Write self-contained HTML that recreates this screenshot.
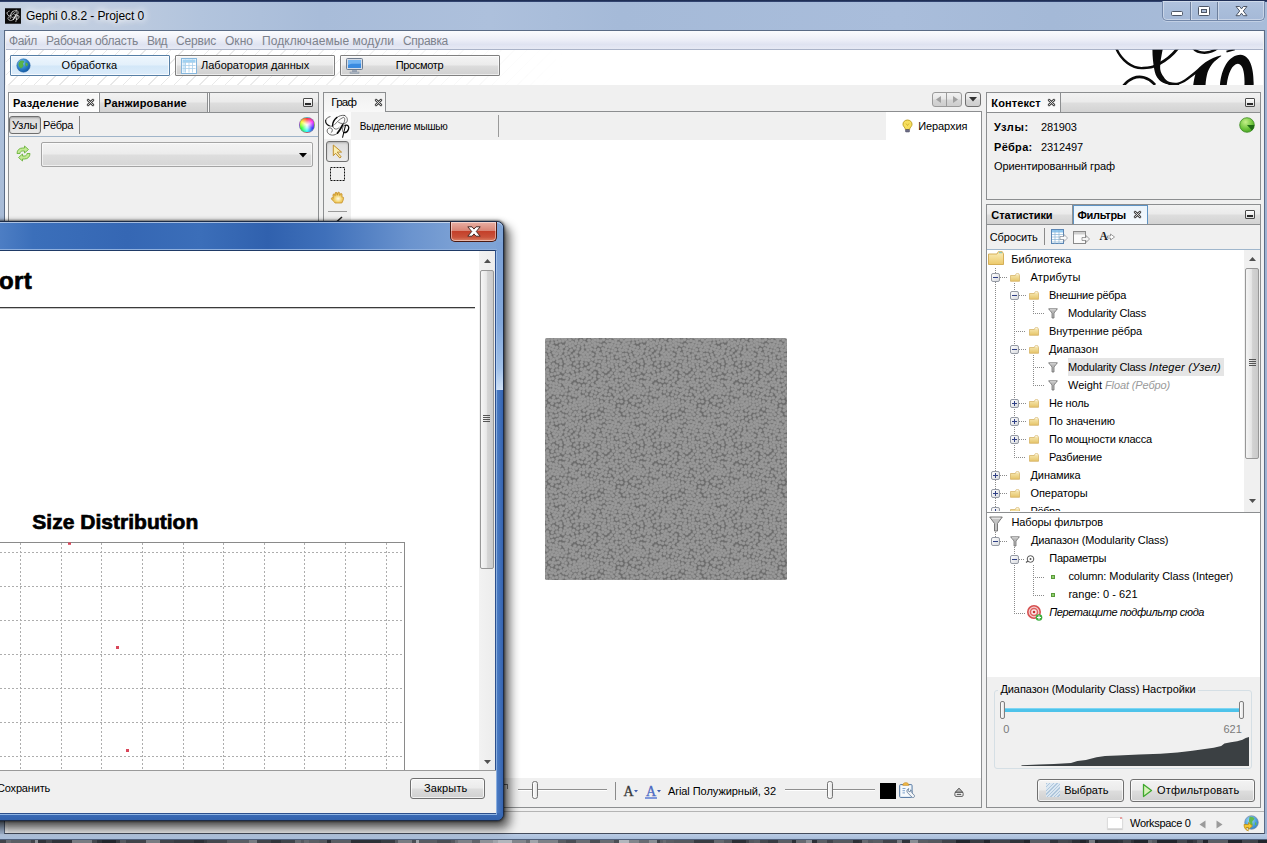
<!DOCTYPE html>
<html><head><meta charset="utf-8">
<style>
*{box-sizing:border-box;margin:0;padding:0}
html,body{width:1267px;height:843px;overflow:hidden;background:#2b2f33;font-family:"Liberation Sans",sans-serif;font-size:11px;color:#000}
.a{position:absolute}
.t{position:absolute;white-space:nowrap;line-height:14px;height:14px}
.b{font-weight:bold}
.i{font-style:italic}
/* window frame */
#frame{left:0;top:0;width:1267px;height:840px;background:linear-gradient(90deg,#c6d2e3 0,#c0cde0 100px,#b2c4dd 200px,#a8bcd9 320px,#adc0dc 490px,#a5bad8 620px,#a9bddb 900px,#a4b9d7 1050px,#a8bcd9 1267px)}
#topstrip{left:0;top:0;width:1267px;height:2px;background:linear-gradient(#1b294d 0,#283a66 70%,#5d729c 100%)}
#client{left:4px;top:30px;width:1261px;height:804px;background:#f0f0f0;border:1px solid #5a6b85;border-bottom-color:#444c5c}
#menubar{left:6px;top:31px;width:1257px;height:18px;background:linear-gradient(#fbfcfe 0,#eef0f8 45%,#dfe3f1 75%,#e6e9f4 100%)}
#menuline{left:6px;top:49px;width:1257px;height:1px;background:#aab3c8}
#toolbar{left:6px;top:50px;width:1257px;height:35px;background:#fff}
.mi{color:#7c818b;font-size:12px;top:34px}
.panel{border:1px solid #8e8f8f;background:#f0f0f0}
.tabbar{background:linear-gradient(#f3f3f3 0,#ebebeb 49%,#dcdcdc 50%,#d2d2d2 100%);border-bottom:1px solid #8e8f8f}
.tabsel{background:linear-gradient(#f1f1f1,#fdfdfd);border-right:1px solid #8e8f8f}
.tabun{border-right:1px solid #8e8f8f}
.btn{border:1px solid #707070;border-radius:3px;background:linear-gradient(#f4f4f4 0,#ececec 48%,#dedede 52%,#d2d2d2 100%);box-shadow:inset 0 0 0 1px rgba(255,255,255,.7)}
</style></head><body>
<div class="a" id="wall" style="left:0;top:838px;width:1267px;height:5px;background:linear-gradient(90deg,#40444a 0px,#40444a 6px,#666a70 6px,#666a70 11px,#5a5e64 11px,#5a5e64 31px,#40444a 31px,#40444a 35px,#8a8e94 35px,#8a8e94 38px,#30343a 38px,#30343a 46px,#44484e 46px,#44484e 52px,#30343a 52px,#30343a 72px,#787c82 72px,#787c82 92px,#44484e 92px,#44484e 97px,#30343a 97px,#30343a 102px,#22262c 102px,#22262c 116px,#383c42 116px,#383c42 120px,#55595f 120px,#55595f 123px,#55595f 123px,#55595f 126px,#40444a 126px,#40444a 146px,#787c82 146px,#787c82 160px,#40444a 160px,#40444a 174px,#383c42 174px,#383c42 194px,#2c3036 194px,#2c3036 204px,#383c42 204px,#383c42 207px,#44484e 207px,#44484e 227px,#5a5e64 227px,#5a5e64 235px,#5a5e64 235px,#5a5e64 249px,#787c82 249px,#787c82 257px,#40444a 257px,#40444a 271px,#30343a 271px,#30343a 281px,#40444a 281px,#40444a 295px,#666a70 295px,#666a70 301px,#55595f 301px,#55595f 304px,#666a70 304px,#666a70 309px,#5a5e64 309px,#5a5e64 313px,#5a5e64 313px,#5a5e64 319px,#55595f 319px,#55595f 327px,#2c3036 327px,#2c3036 331px,#5a5e64 331px,#5a5e64 351px,#2c3036 351px,#2c3036 371px,#2c3036 371px,#2c3036 381px,#383c42 381px,#383c42 395px,#55595f 395px,#55595f 398px,#787c82 398px,#787c82 412px,#4a4e54 412px,#4a4e54 416px,#a0a4aa 416px,#a0a4aa 419px,#585c62 419px,#585c62 429px,#585c62 429px,#585c62 437px,#4a4e54 437px,#4a4e54 443px,#4a4e54 443px,#4a4e54 451px,#54585e 451px,#54585e 455px,#6c7076 455px,#6c7076 458px,#7d8187 458px,#7d8187 472px,#60646a 472px,#60646a 480px,#8e9298 480px,#8e9298 483px,#8e9298 483px,#8e9298 493px,#a0a4aa 493px,#a0a4aa 498px,#b2b6bc 498px,#b2b6bc 512px,#82868c 512px,#82868c 526px,#686c72 526px,#686c72 530px,#a0a4aa 530px,#a0a4aa 538px,#7d8187 538px,#7d8187 544px,#7d8187 544px,#7d8187 558px,#585c62 558px,#585c62 566px,#4a4e54 566px,#4a4e54 576px,#686c72 576px,#686c72 590px,#4a4e54 590px,#4a4e54 600px,#686c72 600px,#686c72 614px,#4a4e54 614px,#4a4e54 619px,#b2b6bc 619px,#b2b6bc 629px,#82868c 629px,#82868c 639px,#686c72 639px,#686c72 649px,#8a8e94 649px,#8a8e94 657px,#40444a 657px,#40444a 660px,#5a5e64 660px,#5a5e64 663px,#666a70 663px,#666a70 666px,#5a5e64 666px,#5a5e64 674px,#55595f 674px,#55595f 694px,#383c42 694px,#383c42 704px,#383c42 704px,#383c42 714px,#666a70 714px,#666a70 724px,#55595f 724px,#55595f 732px,#2c3036 732px,#2c3036 746px,#40444a 746px,#40444a 749px,#55595f 749px,#55595f 754px,#5a5e64 754px,#5a5e64 760px,#44484e 760px,#44484e 768px,#383c42 768px,#383c42 778px,#5a5e64 778px,#5a5e64 792px,#2c3036 792px,#2c3036 796px,#666a70 796px,#666a70 806px,#8a8e94 806px,#8a8e94 812px,#2c3036 812px,#2c3036 817px,#5a5e64 817px,#5a5e64 827px,#40444a 827px,#40444a 833px,#55595f 833px,#55595f 853px,#2c3036 853px,#2c3036 859px,#30343a 859px,#30343a 862px,#666a70 862px,#666a70 868px,#55595f 868px,#55595f 873px,#5a5e64 873px,#5a5e64 883px,#40444a 883px,#40444a 887px,#40444a 887px,#40444a 897px,#787c82 897px,#787c82 902px,#30343a 902px,#30343a 910px,#8a8e94 910px,#8a8e94 918px,#5a5e64 918px,#5a5e64 928px,#55595f 928px,#55595f 942px,#40444a 942px,#40444a 956px,#22262c 956px,#22262c 970px,#383c42 970px,#383c42 984px,#22262c 984px,#22262c 990px,#40444a 990px,#40444a 1010px,#30343a 1010px,#30343a 1024px,#22262c 1024px,#22262c 1030px,#5a5e64 1030px,#5a5e64 1050px,#30343a 1050px,#30343a 1058px,#44484e 1058px,#44484e 1068px,#40444a 1068px,#40444a 1072px,#2c3036 1072px,#2c3036 1080px,#22262c 1080px,#22262c 1086px,#30343a 1086px,#30343a 1089px,#787c82 1089px,#787c82 1095px,#22262c 1095px,#22262c 1098px,#2c3036 1098px,#2c3036 1118px,#30343a 1118px,#30343a 1123px,#44484e 1123px,#44484e 1131px,#30343a 1131px,#30343a 1134px,#22262c 1134px,#22262c 1148px,#666a70 1148px,#666a70 1152px,#55595f 1152px,#55595f 1157px,#22262c 1157px,#22262c 1177px,#44484e 1177px,#44484e 1187px,#2c3036 1187px,#2c3036 1193px,#383c42 1193px,#383c42 1197px,#55595f 1197px,#55595f 1203px,#22262c 1203px,#22262c 1208px,#5a5e64 1208px,#5a5e64 1228px,#22262c 1228px,#22262c 1242px,#44484e 1242px,#44484e 1250px,#40444a 1250px,#40444a 1258px,#22262c 1258px,#22262c 1272px)"></div>
<div class="a" id="frame"></div>
<div class="a" id="topstrip"></div>
<div class="a" id="lframe" style="left:0;top:30px;width:4px;height:810px;background:linear-gradient(#b4c6df 0,#a6bad6 25%,#a6bad6 100%)"></div>
<div class="a" id="rframe" style="left:1265px;top:30px;width:2px;height:810px;background:#9db2d2"></div>
<div class="a" id="bframe" style="left:0;top:834px;width:1267px;height:6px;background:linear-gradient(#b9cbe4,#a9bedb);border-bottom:1px solid #50607c"></div>
<div class="a" id="client"></div>
<div class="a" id="menubar"></div>
<div class="a" id="menuline"></div>
<div class="a" id="toolbar"></div>
<svg class="a" style="left:5px;top:8px" width="16" height="16" viewBox="-40 -20 900 870"><rect x="-40" y="-20" width="900" height="870" fill="#0a0a0a"/><g fill="none" stroke="#f4f4f4" stroke-linecap="round" stroke-linejoin="round"><path d="M205 135C150 145 95 180 78 240" stroke-width="34"/><path d="M78 240C70 300 110 370 180 400" stroke-width="40"/><path d="M180 400C210 412 240 416 275 414" stroke-width="34"/><path d="M620 98C560 85 470 110 400 160" stroke-width="34"/><path d="M400 160C330 220 275 310 280 400" stroke-width="55"/><path d="M280 400C290 470 340 505 400 495C430 488 450 472 470 450" stroke-width="34"/><path d="M620 98C700 125 735 230 685 300C640 352 520 350 450 300" stroke-width="34"/><path d="M340 365C400 300 480 200 600 152C650 172 640 262 598 332" stroke-width="34"/><path d="M575 372C530 440 490 540 420 615" stroke-width="60"/><path d="M420 615C350 690 200 700 135 600C95 520 150 452 220 466C282 482 290 560 236 600" stroke-width="34"/><path d="M600 400C560 450 540 560 600 600" stroke-width="34"/><path d="M640 390C720 360 770 420 740 500C715 570 660 610 600 600" stroke-width="47"/><path d="M650 400L570 735" stroke-width="37"/></g></svg>
<div class="t" style="left:26.0px;top:7.8px;line-height:16px;height:16px;font-size:12px;letter-spacing:-0.09px;color:#000;text-shadow:0 0 6px #fff,0 0 8px #fff,0 0 10px rgba(255,255,255,.9);">Gephi 0.8.2 - Project 0</div>
<div class="a" style="left:1162px;top:1px;width:103px;height:20px;border:1px solid #7388aa;border-top:none;border-radius:0 0 5px 5px;background:linear-gradient(#b1c3de 0,#a9bdda 50%,#a5b9d7 100%);box-shadow:inset 0 0 0 1px rgba(255,255,255,.38),0 1px 0 rgba(255,255,255,.3)"></div>
<div class="a" style="left:1190px;top:2px;width:1px;height:18px;background:#6d7f9c;box-shadow:1px 0 0 rgba(255,255,255,.4)"></div>
<div class="a" style="left:1217px;top:2px;width:1px;height:18px;background:#6d7f9c;box-shadow:1px 0 0 rgba(255,255,255,.4)"></div>
<div class="a" style="left:1171px;top:11px;width:12px;height:5px;background:#fff;border:1px solid #4d5666;border-radius:1.500px"></div>
<div class="a" style="left:1198px;top:6px;width:12px;height:10px;background:#fff;border:1px solid #4d5666;border-radius:1.500px"></div>
<div class="a" style="left:1201px;top:9px;width:6px;height:4px;background:#a9bbd6;border:1px solid #4d5666"></div>
<svg class="a" style="left:1235px;top:5px" width="13" height="12" viewBox="0 0 13 12"><path d="M1 1.500h3.700l1.800 2.400 1.800-2.400H12L8.300 6l3.700 4.700H8.300L6.500 8.200l-1.800 2.500H1L4.700 6z" fill="#fff" stroke="#4d5666" stroke-width="1" stroke-linejoin="round"/></svg>
<div class="t" style="left:9.0px;top:32.8px;line-height:16px;height:16px;font-size:12px;letter-spacing:-0.38px;color:#7d828c;">Файл</div>
<div class="t" style="left:46.0px;top:32.8px;line-height:16px;height:16px;font-size:12px;letter-spacing:-0.18px;color:#7d828c;">Рабочая область</div>
<div class="t" style="left:147.0px;top:32.8px;line-height:16px;height:16px;font-size:12px;letter-spacing:-0.57px;color:#7d828c;">Вид</div>
<div class="t" style="left:176.0px;top:32.8px;line-height:16px;height:16px;font-size:12px;letter-spacing:-0.18px;color:#7d828c;">Сервис</div>
<div class="t" style="left:225.0px;top:32.8px;line-height:16px;height:16px;font-size:12px;letter-spacing:0.03px;color:#7d828c;">Окно</div>
<div class="t" style="left:262.0px;top:32.8px;line-height:16px;height:16px;font-size:12px;letter-spacing:0.07px;color:#7d828c;">Подключаемые модули</div>
<div class="t" style="left:403.0px;top:32.8px;line-height:16px;height:16px;font-size:12px;letter-spacing:-0.30px;color:#7d828c;">Справка</div>
<div class="a" style="left:6px;top:50px;width:560px;height:35px;background:repeating-linear-gradient(135deg,rgba(0,0,0,0) 0,rgba(0,0,0,0) 8px,rgba(150,150,150,.22) 8px,rgba(150,150,150,.22) 9px);-webkit-mask-image:linear-gradient(90deg,#000 0,#000 180px,transparent 560px);mask-image:linear-gradient(90deg,#000 0,#000 180px,transparent 560px)"></div>
<div class="a" style="left:10px;top:55px;width:160px;height:21px;border:1px solid #567fa6;border-radius:1px;background:linear-gradient(#eef6fd 0,#e3f0fb 48%,#d3e7f8 52%,#dcecfa 100%);box-shadow:inset 0 0 0 1px rgba(255,255,255,.7)"></div>
<div class="a" style="left:175px;top:55px;width:160px;height:21px;border:1px solid #808080;border-radius:1px;background:linear-gradient(#f4f4f4 0,#ebebeb 48%,#dcdcdc 52%,#d0d0d0 100%);box-shadow:inset 0 0 0 1px rgba(255,255,255,.6)"></div>
<div class="a" style="left:340px;top:55px;width:160px;height:21px;border:1px solid #808080;border-radius:1px;background:linear-gradient(#f4f4f4 0,#ebebeb 48%,#dcdcdc 52%,#d0d0d0 100%);box-shadow:inset 0 0 0 1px rgba(255,255,255,.6)"></div>
<div class="t" style="left:61.6px;top:57.7px;line-height:15px;height:15px;">Обработка</div>
<div class="t" style="left:201.0px;top:57.7px;line-height:15px;height:15px;">Лаборатория данных</div>
<div class="t" style="left:395.7px;top:57.7px;line-height:15px;height:15px;letter-spacing:-0.34px;">Просмотр</div>
<svg class="a" style="left:16px;top:58px" width="15" height="15" viewBox="0 0 17 17"><defs><radialGradient id="gl" cx=".35" cy=".3" r=".8"><stop offset="0" stop-color="#8fd0f5"/><stop offset=".5" stop-color="#2f86d0"/><stop offset="1" stop-color="#0d4f98"/></radialGradient></defs><circle cx="8.500" cy="8.500" r="7.600" fill="url(#gl)" stroke="#2a6aa8" stroke-width=".6"/><path d="M5 3.500c1.500-.8 3-.6 4 .2.300 1-.8 1.600-1.200 2.600-.4 1.200.9 1.700.4 3-.4 1.100-1.800 1.400-2.400 2.600C4.300 10.800 3 9.200 3 7c0-1.500.9-2.700 2-3.500zM11 5c1 .2 2 .9 2.600 2-.2 1.200-.9 2-1.800 2.600-.6-.9-1.300-1.500-1.100-2.700.1-.7.200-1.300.3-1.900z" fill="#59b44a" stroke="#3b8d36" stroke-width=".3"/></svg>
<svg class="a" style="left:181px;top:58px" width="16" height="16" viewBox="0 0 16 16"><rect x=".5" y=".5" width="15" height="15" fill="#fff" stroke="#86b6dc"/><rect x="1.500" y="1.500" width="13" height="2.500" fill="#9ed2f4"/><rect x="1.500" y="4" width="3" height="10.500" fill="#cfe8f9"/><path d="M1.500 4.500h13M1.500 7.500h13M1.500 10.500h13M4.500 1.500v13M8 1.500v13M11.500 1.500v13" stroke="#a9cfea" stroke-width=".8" fill="none"/></svg>
<svg class="a" style="left:346px;top:58px" width="17" height="16" viewBox="0 0 17 16"><rect x=".5" y=".5" width="16" height="11" rx="1" fill="#d5dce6" stroke="#6e7c8e"/><rect x="2" y="2" width="13" height="8" fill="#3a8be0"/><path d="M2 2h13v3.500C10 6.500 6 4.500 2 7z" fill="#72b4f2"/><rect x="6" y="12" width="5" height="2" fill="#9aa5b4"/><rect x="4" y="14" width="9" height="1.500" fill="#b8c1cd" stroke="#7b8796" stroke-width=".5"/></svg>
<svg class="a" style="left:1105px;top:45px" width="162" height="45" viewBox="0 0 1267 352"><defs><clipPath id="lc"><rect x="0" y="38" width="1242" height="274"/></clipPath></defs><g clip-path="url(#lc)"><g fill="none" stroke="#0a0a0a" stroke-linecap="butt"><path d="M85 20C125 120 215 188 300 180S375 172 392 160" stroke-width="19"/><path d="M425 146C460 128 520 90 572 22" stroke-width="22"/><path d="M690 25C725 72 825 72 880 25" stroke-width="19"/><path d="M950 52L1015 34" stroke-width="14"/><path d="M140 325C185 262 250 238 305 254S372 292 392 312" stroke-width="21"/></g><path d="M371 20L454 20C440 90 428 150 432 190C436 215 445 232 457 246C470 268 485 282 507 290C525 296 545 297 563 295.600C585 290 600 282 624 268C650 250 675 228 702 207C730 182 755 158 785 134.500C825 108 865 92 907 82L910 87C885 105 860 125 840 146C822 168 810 192 801.500 218C793 250 788 280 785 330L690 330L690.500 309.500C695 280 700 250 707 228C690 240 660 265 624 290C610 298 595 304 579 309.500L575 330L500 330L496 309.500C465 300 440 290 424 273C400 250 390 220 385 190C375 130 370 80 371 20Z" fill="#0a0a0a"/><path d="M898 330C905 200 960 80 1060 77C1140 80 1168 200 1162 330L1090 330C1096 220 1080 150 1040 146C990 150 960 230 950 330Z" fill="#0a0a0a"/></g></svg>

<!--MENU-->
<!--TOOLBAR-->
<div class="a" style="left:5px;top:85px;width:3px;height:748px;background:#f8f8f8"></div>
<div class="a" style="left:8px;top:92px;width:311px;height:716px;border:1px solid #8c8e90;background:#f0f0f0"></div>
<div class="a" style="left:9px;top:93px;width:309px;height:19px;background:linear-gradient(#f2f2f2 0,#ebebeb 45%,#dddddd 55%,#d3d3d3 100%);"></div>
<div class="a" style="left:9px;top:112px;width:309px;height:1px;background:#8c8e90"></div>
<div class="a" style="left:9px;top:93px;width:91px;height:19px;background:linear-gradient(#f6f6f6,#fdfdfd);border-right:1px solid #8c8e90;box-shadow:inset 1px 1px 0 #fff,inset -1px 0 0 #fff"></div>
<div class="a" style="left:207px;top:93px;width:1px;height:19px;background:#8c8e90"></div>
<div class="a" style="left:208px;top:93px;width:1px;height:19px;background:#f8f8f8"></div>
<div class="a" style="left:209px;top:93px;width:1px;height:19px;background:#8c8e90"></div>
<div class="t b" style="left:13.0px;top:95.7px;line-height:15px;height:15px;letter-spacing:0.15px;">Разделение</div>
<svg class="a" style="left:86px;top:98px" width="9" height="9" viewBox="0 0 9 9"><path d="M2 2l5 5M7 2l-5 5" stroke="#454545" stroke-width="2.500" stroke-linecap="round" fill="none"/><path d="M2 2l5 5M7 2l-5 5" stroke="#f4f4f4" stroke-width=".8" stroke-linecap="round" fill="none"/></svg>
<div class="t b" style="left:104.0px;top:95.7px;line-height:15px;height:15px;letter-spacing:0.23px;">Ранжирование</div>
<div class="a" style="left:303px;top:98px;width:10px;height:9px;border:1px solid #4a4a4a;background:linear-gradient(#fdfdfd,#dcdcdc);border-radius:1px"><div class="a" style="left:1px;top:4px;width:6px;height:2px;background:#2a2a2a"></div></div>
<div class="a" style="left:9px;top:136px;width:309px;height:1px;background:#9fb4c9"></div>
<div class="a" style="left:9px;top:116px;width:32px;height:18px;border:1px solid #6f6f6f;border-radius:3px;background:linear-gradient(#d9d9d9,#e9e9e9);box-shadow:inset 0 1px 2px rgba(0,0,0,.25)"></div>
<div class="t" style="left:12.0px;top:117.7px;line-height:15px;height:15px;letter-spacing:-0.03px;">Узлы</div>
<div class="t" style="left:43.0px;top:117.7px;line-height:15px;height:15px;letter-spacing:-0.40px;">Рёбра</div>
<div class="a" style="left:79px;top:116px;width:1px;height:18px;background:#8a8a8a"></div>
<div class="a" style="left:299px;top:117px;width:16px;height:16px;border-radius:50%;background:radial-gradient(circle,#fff 0,rgba(255,255,255,.6) 30%,rgba(255,255,255,0) 65%),conic-gradient(#f33,#f3f,#33f,#3ff,#3f3,#ff3,#f33);border:1px solid rgba(120,120,140,.6)"></div>
<div class="a" style="left:41px;top:142px;width:272px;height:25px;border:1px solid #a4a4a4;border-radius:2px;background:linear-gradient(#f3f3f3 0,#ececec 48%,#dedede 52%,#d6d6d6 100%);box-shadow:inset 0 0 0 1px rgba(255,255,255,.6)"></div>
<svg class="a" style="left:299px;top:153px" width="8" height="5" viewBox="0 0 8 5"><path d="M0 0h8L4 4.500z" fill="#000"/></svg>
<svg class="a" style="left:15px;top:145px" width="17" height="17" viewBox="0 0 17 17"><g fill="#c3ea94" stroke="#6cb33e" stroke-width=".9" stroke-linejoin="round"><path d="M2 8.500C2 5 4.500 3 7.500 3h2V1l4 3.500-4 3.500V6h-2C6 6 5 7 5 8.500z"/><path d="M15 8.500C15 12 12.500 14 9.500 14h-2v2l-4-3.500 4-3.500v2h2c1.500 0 2.500-1 2.500-2.500z"/></g></svg>

<div class="a" style="left:323px;top:111px;width:659px;height:697px;border:1px solid #8c8e90;background:#fff"></div>
<div class="a" style="left:323px;top:92px;width:63px;height:20px;border:1px solid #8c8e90;border-bottom:none;background:linear-gradient(#f1f1f1,#f8f8f8)"></div>
<div class="t" style="left:331.3px;top:95.3px;line-height:15.5px;height:15.5px;font-size:11.5px;letter-spacing:-0.71px;">Граф</div>
<svg class="a" style="left:374px;top:98px" width="9" height="9" viewBox="0 0 9 9"><path d="M2 2l5 5M7 2l-5 5" stroke="#454545" stroke-width="2.500" stroke-linecap="round" fill="none"/><path d="M2 2l5 5M7 2l-5 5" stroke="#f4f4f4" stroke-width=".8" stroke-linecap="round" fill="none"/></svg>
<div class="a" style="left:932px;top:92px;width:30px;height:15px;border:1px solid #9a9a9a;border-radius:3px;background:linear-gradient(#f2f2f2 0,#e6e6e6 48%,#d6d6d6 52%,#cecece 100%)"></div>
<div class="a" style="left:946px;top:93px;width:1px;height:13px;background:#9a9a9a"></div>
<svg class="a" style="left:936px;top:96px" width="6" height="7" viewBox="0 0 6 7"><path d="M5 0v7L0 3.500z" fill="#a0a0a0"/></svg>
<svg class="a" style="left:952px;top:96px" width="6" height="7" viewBox="0 0 6 7"><path d="M1 0v7l5-3.500z" fill="#a0a0a0"/></svg>
<div class="a" style="left:965px;top:92px;width:16px;height:15px;border:1px solid #707070;border-radius:3px;background:linear-gradient(#f2f2f2 0,#e6e6e6 48%,#d6d6d6 52%,#cecece 100%)"></div>
<svg class="a" style="left:969px;top:97px" width="8" height="5" viewBox="0 0 8 5"><path d="M0 0h8L4 4.500z" fill="#333"/></svg>
<div class="a" style="left:324px;top:112px;width:27px;height:695px;background:#f0f0f0"></div>
<div class="a" style="left:351px;top:112px;width:535px;height:28px;background:#f0f0f0"></div>
<div class="a" style="left:324px;top:112px;width:27px;height:27px;background:#fcfcfc"></div>
<svg class="a" style="left:323px;top:112px" width="30" height="29" viewBox="0 0 872 843"><g fill="none" stroke="#080808" stroke-linecap="round" stroke-linejoin="round"><path d="M205 135C150 145 95 180 78 240" stroke-width="19"/><path d="M78 240C70 300 110 370 180 400" stroke-width="32"/><path d="M180 400C210 412 240 416 275 414" stroke-width="17"/><path d="M620 98C560 85 470 110 400 160" stroke-width="18"/><path d="M400 160C330 220 275 310 280 400" stroke-width="44"/><path d="M280 400C290 470 340 505 400 495C430 488 450 472 470 450" stroke-width="16"/><path d="M620 98C700 125 735 230 685 300C640 352 520 350 450 300" stroke-width="16"/><path d="M340 365C400 300 480 200 600 152C650 172 640 262 598 332" stroke-width="16"/><path d="M575 372C530 440 490 540 420 615" stroke-width="48"/><path d="M420 615C350 690 200 700 135 600C95 520 150 452 220 466C282 482 290 560 236 600" stroke-width="18"/><path d="M600 400C560 450 540 560 600 600" stroke-width="17"/><path d="M640 390C720 360 770 420 740 500C715 570 660 610 600 600" stroke-width="38"/><path d="M650 400L570 735" stroke-width="30"/></g></svg>
<div class="t" style="left:359.7px;top:119.9px;line-height:14px;height:14px;font-size:10px;letter-spacing:-0.17px;">Выделение мышью</div>
<div class="a" style="left:498px;top:115px;width:1px;height:22px;background:#9a9a9a"></div>
<div class="a" style="left:326px;top:141px;width:23px;height:21px;border:1px solid #6f6f6f;border-radius:3px;background:linear-gradient(#dcdcdc,#ebebeb);box-shadow:inset 0 1px 2px rgba(0,0,0,.2)"></div>
<svg class="a" style="left:332px;top:144px" width="11" height="15" viewBox="0 0 11 15"><path d="M1.300 1v10.700l2.300-2.400 4.200 4.700 1.400-1.100-4-4.800h4.400z" fill="#fbeeb0" stroke="#c0902e" stroke-width="1" stroke-linejoin="round"/></svg>
<svg class="a" style="left:330px;top:167px" width="15" height="14" viewBox="0 0 15 14"><rect x=".5" y=".5" width="14" height="13" fill="none" stroke="#111" stroke-width="1" stroke-dasharray="2 1"/></svg>
<svg class="a" style="left:330px;top:191px" width="16" height="13" viewBox="0 0 16 13"><defs><radialGradient id="hg" cx=".55" cy=".6" r=".55"><stop offset="0" stop-color="#fffbea"/><stop offset=".55" stop-color="#f3d36e"/><stop offset="1" stop-color="#dca93a"/></radialGradient></defs><path d="M5 12C4.500 10.600 2.600 9.800 1.600 8.200C.9 7 2.200 6 3.300 7L3.400 7.200L2.900 4.200C2.800 2.800 4.500 2.500 4.900 3.800L5.100 4.600L5 2.400C5.100 1 7 1 7.200 2.300L7.400 4.200L7.600 2C7.900.8 9.600 1 9.700 2.300L9.700 4.400L10.200 3C10.700 2 12.200 2.400 12.100 3.600L11.900 6.200C12.800 5.600 13.800 6.200 13.600 7.200C13.300 9 12.800 10.600 11.800 12Z" fill="url(#hg)" stroke="#c9942e" stroke-width=".8" stroke-linejoin="round"/></svg>
<div class="a" style="left:328px;top:211px;width:19px;height:1px;background:#9a9a9a"></div>
<svg class="a" style="left:336px;top:216px" width="8" height="6" viewBox="0 0 8 6"><path d="M1 5.500L6 1" stroke="#222" stroke-width="1.500"/></svg>
<svg class="a" style="left:902px;top:119px" width="11" height="14" viewBox="0 0 11 14"><path d="M5.500 1C2.800 1 1 3 1 5.200c0 1.800 1.200 2.600 1.900 3.800.3.500.4 1 .4 1.500h4.400c0-.5.100-1 .4-1.500C8.800 7.800 10 7 10 5.200 10 3 8.200 1 5.500 1z" fill="#f7df5e" stroke="#b89a18" stroke-width=".9"/><path d="M4 4.500l1.500 2 1.500-2" fill="none" stroke="#c9a820" stroke-width=".7"/><rect x="3.500" y="10.500" width="4" height="2.500" rx=".6" fill="#6d6d86" stroke="#484860" stroke-width=".5"/></svg>
<div class="t" style="left:918.3px;top:118.7px;line-height:15px;height:15px;letter-spacing:-0.11px;">Иерархия</div>
<svg class="a" style="left:545px;top:338px" width="242" height="242" viewBox="0 0 242 242"><defs><pattern id="gp" width="81" height="81" patternUnits="userSpaceOnUse"><rect width="81" height="81" fill="#6b6b6b"/><g fill="#989898" stroke="#8a8a8a" stroke-width=".3"><circle cx="26.2" cy="12.2" r="1.75"/><circle cx="52.7" cy="5.9" r="1.75"/><circle cx="43.4" cy="29.6" r="1.75"/><circle cx="4.7" cy="41.1" r="1.75"/><circle cx="3.0" cy="35.1" r="1.75"/><circle cx="5.7" cy="7.3" r="1.75"/><circle cx="34.4" cy="67.0" r="1.75"/><circle cx="10.0" cy="18.1" r="1.75"/><circle cx="50.8" cy="76.8" r="1.75"/><circle cx="46.7" cy="32.1" r="1.75"/><circle cx="-1.9" cy="3.8" r="1.75"/><circle cx="79.1" cy="3.8" r="1.75"/><circle cx="69.5" cy="23.5" r="1.75"/><circle cx="11.7" cy="9.5" r="1.75"/><circle cx="25.0" cy="66.1" r="1.75"/><circle cx="14.6" cy="47.1" r="1.75"/><circle cx="51.8" cy="30.2" r="1.75"/><circle cx="44.4" cy="5.1" r="1.75"/><circle cx="4.8" cy="16.7" r="1.75"/><circle cx="55.1" cy="34.6" r="1.75"/><circle cx="25.4" cy="47.4" r="1.75"/><circle cx="36.7" cy="24.3" r="1.75"/><circle cx="64.3" cy="56.6" r="1.75"/><circle cx="19.8" cy="46.5" r="1.75"/><circle cx="42.5" cy="70.9" r="1.75"/><circle cx="59.1" cy="23.3" r="1.75"/><circle cx="-1.6" cy="9.6" r="1.75"/><circle cx="79.4" cy="9.6" r="1.75"/><circle cx="33.9" cy="61.3" r="1.75"/><circle cx="12.3" cy="39.6" r="1.75"/><circle cx="3.2" cy="54.1" r="1.75"/><circle cx="61.9" cy="46.4" r="1.75"/><circle cx="56.3" cy="48.1" r="1.75"/><circle cx="47.0" cy="37.0" r="1.75"/><circle cx="68.0" cy="76.5" r="1.75"/><circle cx="38.4" cy="53.8" r="1.75"/><circle cx="4.9" cy="56.8" r="1.75"/><circle cx="52.4" cy="-0.6" r="1.75"/><circle cx="52.4" cy="80.4" r="1.75"/><circle cx="66.6" cy="23.1" r="1.75"/><circle cx="31.2" cy="54.2" r="1.75"/><circle cx="4.8" cy="62.2" r="1.75"/><circle cx="31.7" cy="70.6" r="1.75"/><circle cx="6.5" cy="36.4" r="1.75"/><circle cx="66.4" cy="70.0" r="1.75"/><circle cx="22.6" cy="33.6" r="1.75"/><circle cx="77.6" cy="12.2" r="1.75"/><circle cx="14.3" cy="18.8" r="1.75"/><circle cx="18.9" cy="39.3" r="1.75"/><circle cx="47.7" cy="21.3" r="1.75"/><circle cx="0.3" cy="33.9" r="1.75"/><circle cx="81.3" cy="33.9" r="1.75"/><circle cx="29.9" cy="45.9" r="1.75"/><circle cx="77.2" cy="55.9" r="1.75"/><circle cx="41.8" cy="50.0" r="1.75"/><circle cx="72.9" cy="63.2" r="1.75"/><circle cx="31.8" cy="32.3" r="1.75"/><circle cx="8.4" cy="51.4" r="1.75"/><circle cx="16.9" cy="13.1" r="1.75"/><circle cx="27.5" cy="4.3" r="1.75"/><circle cx="0.0" cy="12.3" r="1.75"/><circle cx="81.0" cy="12.3" r="1.75"/><circle cx="8.2" cy="29.5" r="1.75"/><circle cx="2.1" cy="70.8" r="1.75"/><circle cx="49.7" cy="12.0" r="1.75"/><circle cx="20.4" cy="28.1" r="1.75"/><circle cx="29.5" cy="10.0" r="1.75"/><circle cx="68.8" cy="-0.6" r="1.75"/><circle cx="68.8" cy="80.4" r="1.75"/><circle cx="37.7" cy="39.2" r="1.75"/><circle cx="27.8" cy="21.4" r="1.75"/><circle cx="67.1" cy="13.1" r="1.75"/><circle cx="1.9" cy="77.0" r="1.75"/><circle cx="82.9" cy="77.0" r="1.75"/><circle cx="42.8" cy="11.9" r="1.75"/><circle cx="44.0" cy="2.2" r="1.75"/><circle cx="42.8" cy="-1.7" r="1.75"/><circle cx="42.8" cy="79.3" r="1.75"/><circle cx="69.9" cy="56.4" r="1.75"/><circle cx="13.5" cy="62.5" r="1.75"/><circle cx="43.1" cy="63.1" r="1.75"/><circle cx="26.7" cy="18.1" r="1.75"/><circle cx="65.7" cy="-1.2" r="1.75"/><circle cx="65.7" cy="79.8" r="1.75"/><circle cx="69.1" cy="65.3" r="1.75"/><circle cx="66.3" cy="59.9" r="1.75"/><circle cx="2.3" cy="22.6" r="1.75"/><circle cx="21.0" cy="56.1" r="1.75"/><circle cx="77.5" cy="36.2" r="1.75"/><circle cx="75.9" cy="-1.0" r="1.75"/><circle cx="75.9" cy="80.0" r="1.75"/><circle cx="77.4" cy="29.5" r="1.75"/><circle cx="17.9" cy="18.4" r="1.75"/><circle cx="50.5" cy="72.9" r="1.75"/><circle cx="68.1" cy="38.8" r="1.75"/><circle cx="52.9" cy="64.8" r="1.75"/><circle cx="60.8" cy="38.7" r="1.75"/><circle cx="78.7" cy="32.1" r="1.75"/><circle cx="32.5" cy="76.7" r="1.75"/><circle cx="58.7" cy="13.8" r="1.75"/><circle cx="10.3" cy="12.2" r="1.75"/><circle cx="11.8" cy="66.9" r="1.75"/><circle cx="-1.6" cy="53.2" r="1.75"/><circle cx="79.4" cy="53.2" r="1.75"/><circle cx="10.6" cy="1.2" r="1.75"/><circle cx="10.6" cy="82.2" r="1.75"/><circle cx="42.7" cy="75.6" r="1.75"/><circle cx="35.1" cy="70.6" r="1.75"/><circle cx="66.9" cy="17.1" r="1.75"/><circle cx="20.4" cy="23.7" r="1.75"/><circle cx="10.6" cy="73.7" r="1.75"/><circle cx="28.7" cy="37.1" r="1.75"/><circle cx="47.3" cy="73.2" r="1.75"/><circle cx="40.6" cy="43.1" r="1.75"/><circle cx="35.7" cy="14.8" r="1.75"/><circle cx="0.3" cy="64.7" r="1.75"/><circle cx="81.3" cy="64.7" r="1.75"/><circle cx="58.7" cy="45.1" r="1.75"/><circle cx="26.4" cy="42.0" r="1.75"/><circle cx="8.6" cy="45.4" r="1.75"/><circle cx="62.6" cy="41.1" r="1.75"/><circle cx="73.9" cy="35.9" r="1.75"/><circle cx="49.6" cy="40.9" r="1.75"/><circle cx="41.5" cy="56.1" r="1.75"/><circle cx="36.6" cy="43.2" r="1.75"/><circle cx="38.7" cy="76.3" r="1.75"/><circle cx="56.6" cy="71.0" r="1.75"/><circle cx="76.3" cy="21.0" r="1.75"/><circle cx="9.9" cy="35.8" r="1.75"/><circle cx="5.9" cy="19.5" r="1.75"/><circle cx="63.5" cy="72.7" r="1.75"/><circle cx="12.5" cy="58.0" r="1.75"/><circle cx="53.5" cy="11.6" r="1.75"/><circle cx="71.5" cy="78.4" r="1.75"/><circle cx="17.8" cy="77.2" r="1.75"/><circle cx="32.3" cy="39.5" r="1.75"/><circle cx="-0.8" cy="67.4" r="1.75"/><circle cx="80.2" cy="67.4" r="1.75"/><circle cx="13.1" cy="35.0" r="1.75"/><circle cx="15.9" cy="25.8" r="1.75"/><circle cx="58.5" cy="1.6" r="1.75"/><circle cx="58.5" cy="82.6" r="1.75"/><circle cx="1.5" cy="26.9" r="1.75"/><circle cx="82.5" cy="26.9" r="1.75"/><circle cx="5.2" cy="-1.2" r="1.75"/><circle cx="5.2" cy="79.8" r="1.75"/><circle cx="8.5" cy="21.5" r="1.75"/><circle cx="21.9" cy="10.5" r="1.75"/><circle cx="34.2" cy="73.8" r="1.75"/><circle cx="46.2" cy="56.7" r="1.75"/><circle cx="7.2" cy="4.7" r="1.75"/><circle cx="5.9" cy="76.0" r="1.75"/><circle cx="6.8" cy="69.4" r="1.75"/><circle cx="36.8" cy="27.5" r="1.75"/><circle cx="42.7" cy="19.3" r="1.75"/><circle cx="25.3" cy="24.7" r="1.75"/><circle cx="40.5" cy="14.4" r="1.75"/><circle cx="20.3" cy="1.2" r="1.75"/><circle cx="20.3" cy="82.2" r="1.75"/><circle cx="15.3" cy="38.5" r="1.75"/><circle cx="75.7" cy="8.6" r="1.75"/><circle cx="66.3" cy="35.0" r="1.75"/><circle cx="40.1" cy="67.6" r="1.75"/><circle cx="55.7" cy="-1.4" r="1.75"/><circle cx="55.7" cy="79.6" r="1.75"/><circle cx="27.8" cy="67.4" r="1.75"/><circle cx="57.2" cy="51.5" r="1.75"/><circle cx="32.8" cy="28.2" r="1.75"/><circle cx="4.4" cy="10.5" r="1.75"/><circle cx="20.7" cy="13.2" r="1.75"/><circle cx="22.8" cy="19.6" r="1.75"/><circle cx="23.7" cy="37.2" r="1.75"/><circle cx="21.3" cy="77.9" r="1.75"/><circle cx="78.8" cy="44.3" r="1.75"/><circle cx="25.1" cy="28.9" r="1.75"/><circle cx="7.3" cy="32.4" r="1.75"/><circle cx="3.4" cy="1.8" r="1.75"/><circle cx="3.4" cy="82.8" r="1.75"/><circle cx="47.4" cy="42.9" r="1.75"/><circle cx="60.8" cy="53.3" r="1.75"/><circle cx="3.5" cy="67.7" r="1.75"/><circle cx="72.2" cy="50.8" r="1.75"/><circle cx="59.4" cy="65.8" r="1.75"/><circle cx="11.3" cy="42.4" r="1.75"/><circle cx="65.2" cy="66.9" r="1.75"/><circle cx="55.3" cy="56.2" r="1.75"/><circle cx="45.2" cy="50.8" r="1.75"/><circle cx="50.7" cy="55.1" r="1.75"/><circle cx="39.6" cy="0.3" r="1.75"/><circle cx="39.6" cy="81.3" r="1.75"/><circle cx="59.7" cy="20.4" r="1.75"/><circle cx="59.1" cy="16.6" r="1.75"/><circle cx="59.9" cy="-2.0" r="1.75"/><circle cx="59.9" cy="79.0" r="1.75"/><circle cx="40.0" cy="31.0" r="1.75"/><circle cx="62.1" cy="50.0" r="1.75"/><circle cx="11.9" cy="20.6" r="1.75"/><circle cx="54.7" cy="23.6" r="1.75"/><circle cx="41.8" cy="37.6" r="1.75"/><circle cx="37.8" cy="9.6" r="1.75"/><circle cx="72.4" cy="16.1" r="1.75"/><circle cx="-1.8" cy="75.8" r="1.75"/><circle cx="79.2" cy="75.8" r="1.75"/><circle cx="66.4" cy="41.2" r="1.75"/><circle cx="18.7" cy="72.7" r="1.75"/><circle cx="0.3" cy="39.8" r="1.75"/><circle cx="81.3" cy="39.8" r="1.75"/><circle cx="11.4" cy="27.9" r="1.75"/><circle cx="0.1" cy="60.8" r="1.75"/><circle cx="81.1" cy="60.8" r="1.75"/><circle cx="68.0" cy="9.7" r="1.75"/><circle cx="73.0" cy="23.5" r="1.75"/><circle cx="-0.1" cy="47.7" r="1.75"/><circle cx="80.9" cy="47.7" r="1.75"/><circle cx="22.3" cy="3.9" r="1.75"/><circle cx="24.1" cy="59.9" r="1.75"/><circle cx="13.6" cy="13.1" r="1.75"/><circle cx="15.6" cy="7.3" r="1.75"/><circle cx="27.7" cy="7.4" r="1.75"/><circle cx="19.4" cy="20.9" r="1.75"/><circle cx="60.7" cy="33.4" r="1.75"/><circle cx="33.5" cy="42.5" r="1.75"/><circle cx="32.4" cy="36.1" r="1.75"/><circle cx="77.3" cy="68.7" r="1.75"/><circle cx="70.7" cy="1.8" r="1.75"/><circle cx="70.7" cy="82.8" r="1.75"/><circle cx="47.6" cy="0.0" r="1.75"/><circle cx="47.6" cy="81.0" r="1.75"/><circle cx="52.4" cy="61.9" r="1.75"/><circle cx="42.5" cy="47.2" r="1.75"/><circle cx="31.4" cy="18.1" r="1.75"/><circle cx="71.6" cy="38.5" r="1.75"/><circle cx="24.9" cy="1.8" r="1.75"/><circle cx="24.9" cy="82.8" r="1.75"/><circle cx="34.0" cy="20.8" r="1.75"/><circle cx="54.1" cy="74.9" r="1.75"/><circle cx="27.4" cy="34.1" r="1.75"/><circle cx="55.3" cy="16.0" r="1.75"/><circle cx="78.6" cy="25.2" r="1.75"/><circle cx="17.9" cy="61.6" r="1.75"/><circle cx="18.1" cy="33.8" r="1.75"/><circle cx="11.9" cy="31.9" r="1.75"/><circle cx="11.5" cy="4.2" r="1.75"/><circle cx="72.8" cy="71.6" r="1.75"/><circle cx="75.5" cy="26.7" r="1.75"/><circle cx="15.0" cy="75.8" r="1.75"/><circle cx="13.7" cy="0.2" r="1.75"/><circle cx="13.7" cy="81.2" r="1.75"/><circle cx="78.1" cy="16.8" r="1.75"/><circle cx="30.2" cy="74.5" r="1.75"/><circle cx="15.6" cy="29.5" r="1.75"/><circle cx="62.1" cy="3.3" r="1.75"/><circle cx="2.8" cy="5.1" r="1.75"/><circle cx="60.5" cy="72.8" r="1.75"/><circle cx="77.6" cy="50.0" r="1.75"/><circle cx="76.4" cy="2.0" r="1.75"/><circle cx="76.4" cy="83.0" r="1.75"/><circle cx="75.2" cy="14.8" r="1.75"/><circle cx="49.2" cy="26.6" r="1.75"/><circle cx="63.4" cy="6.4" r="1.75"/><circle cx="2.7" cy="44.8" r="1.75"/><circle cx="26.4" cy="-1.6" r="1.75"/><circle cx="26.4" cy="79.4" r="1.75"/><circle cx="21.5" cy="6.8" r="1.75"/><circle cx="7.8" cy="40.4" r="1.75"/><circle cx="60.6" cy="68.6" r="1.75"/><circle cx="32.1" cy="-0.6" r="1.75"/><circle cx="32.1" cy="80.4" r="1.75"/><circle cx="65.5" cy="52.9" r="1.75"/><circle cx="21.1" cy="63.0" r="1.75"/><circle cx="48.3" cy="50.2" r="1.75"/><circle cx="64.4" cy="44.4" r="1.75"/><circle cx="29.5" cy="16.0" r="1.75"/><circle cx="16.0" cy="10.3" r="1.75"/><circle cx="39.1" cy="4.3" r="1.75"/><circle cx="75.0" cy="31.4" r="1.75"/><circle cx="63.7" cy="18.0" r="1.75"/><circle cx="34.0" cy="47.2" r="1.75"/><circle cx="34.5" cy="53.4" r="1.75"/><circle cx="36.2" cy="35.5" r="1.75"/><circle cx="1.9" cy="50.1" r="1.75"/><circle cx="82.9" cy="50.1" r="1.75"/><circle cx="39.6" cy="19.1" r="1.75"/><circle cx="61.8" cy="63.2" r="1.75"/><circle cx="5.3" cy="28.4" r="1.75"/><circle cx="41.0" cy="25.8" r="1.75"/><circle cx="70.7" cy="45.0" r="1.75"/><circle cx="29.2" cy="61.9" r="1.75"/><circle cx="47.5" cy="53.8" r="1.75"/><circle cx="49.9" cy="35.0" r="1.75"/><circle cx="47.7" cy="16.5" r="1.75"/><circle cx="75.9" cy="59.4" r="1.75"/><circle cx="18.3" cy="8.5" r="1.75"/><circle cx="21.5" cy="52.0" r="1.75"/><circle cx="60.4" cy="26.5" r="1.75"/><circle cx="71.3" cy="26.6" r="1.75"/><circle cx="35.4" cy="58.7" r="1.75"/><circle cx="46.2" cy="24.9" r="1.75"/><circle cx="17.2" cy="50.4" r="1.75"/><circle cx="56.5" cy="59.7" r="1.75"/><circle cx="5.3" cy="47.8" r="1.75"/><circle cx="74.1" cy="76.5" r="1.75"/><circle cx="51.2" cy="23.3" r="1.75"/><circle cx="29.8" cy="26.0" r="1.75"/><circle cx="78.1" cy="40.8" r="1.75"/><circle cx="69.0" cy="50.1" r="1.75"/><circle cx="28.1" cy="57.1" r="1.75"/><circle cx="69.8" cy="7.4" r="1.75"/><circle cx="0.1" cy="16.4" r="1.75"/><circle cx="81.1" cy="16.4" r="1.75"/><circle cx="39.8" cy="64.5" r="1.75"/><circle cx="56.7" cy="40.4" r="1.75"/><circle cx="56.5" cy="63.7" r="1.75"/><circle cx="71.7" cy="19.3" r="1.75"/><circle cx="8.2" cy="78.0" r="1.75"/><circle cx="31.5" cy="2.7" r="1.75"/><circle cx="32.3" cy="64.1" r="1.75"/><circle cx="11.5" cy="48.9" r="1.75"/><circle cx="46.5" cy="60.7" r="1.75"/><circle cx="25.4" cy="50.9" r="1.75"/><circle cx="51.0" cy="20.3" r="1.75"/><circle cx="14.8" cy="53.0" r="1.75"/><circle cx="63.0" cy="31.5" r="1.75"/><circle cx="17.0" cy="55.4" r="1.75"/><circle cx="17.7" cy="64.9" r="1.75"/><circle cx="10.5" cy="62.9" r="1.75"/><circle cx="28.6" cy="51.7" r="1.75"/><circle cx="67.5" cy="28.7" r="1.75"/><circle cx="13.6" cy="72.2" r="1.75"/><circle cx="49.3" cy="63.3" r="1.75"/><circle cx="43.0" cy="60.1" r="1.75"/><circle cx="53.9" cy="68.1" r="1.75"/><circle cx="51.6" cy="51.5" r="1.75"/><circle cx="40.8" cy="22.0" r="1.75"/><circle cx="14.7" cy="3.0" r="1.75"/><circle cx="66.6" cy="63.7" r="1.75"/><circle cx="33.4" cy="8.3" r="1.75"/><circle cx="52.2" cy="17.2" r="1.75"/><circle cx="0.4" cy="55.4" r="1.75"/><circle cx="81.4" cy="55.4" r="1.75"/><circle cx="59.1" cy="6.8" r="1.75"/><circle cx="76.5" cy="63.6" r="1.75"/><circle cx="64.1" cy="37.2" r="1.75"/><circle cx="7.1" cy="65.3" r="1.75"/><circle cx="71.7" cy="42.3" r="1.75"/><circle cx="38.6" cy="47.7" r="1.75"/><circle cx="15.3" cy="15.6" r="1.75"/><circle cx="63.8" cy="12.6" r="1.75"/><circle cx="73.7" cy="5.2" r="1.75"/><circle cx="54.2" cy="31.8" r="1.75"/><circle cx="18.0" cy="3.1" r="1.75"/><circle cx="67.8" cy="3.8" r="1.75"/><circle cx="61.2" cy="76.1" r="1.75"/><circle cx="8.5" cy="26.2" r="1.75"/><circle cx="25.8" cy="73.2" r="1.75"/><circle cx="4.6" cy="72.5" r="1.75"/><circle cx="20.9" cy="16.3" r="1.75"/><circle cx="46.3" cy="11.2" r="1.75"/><circle cx="65.7" cy="47.2" r="1.75"/><circle cx="15.1" cy="67.4" r="1.75"/><circle cx="20.3" cy="66.2" r="1.75"/><circle cx="32.9" cy="11.1" r="1.75"/><circle cx="47.9" cy="69.7" r="1.75"/><circle cx="35.3" cy="-1.5" r="1.75"/><circle cx="35.3" cy="79.5" r="1.75"/><circle cx="49.6" cy="38.0" r="1.75"/><circle cx="45.1" cy="39.8" r="1.75"/><circle cx="70.6" cy="35.6" r="1.75"/><circle cx="59.8" cy="60.2" r="1.75"/><circle cx="47.1" cy="7.1" r="1.75"/><circle cx="28.4" cy="76.8" r="1.75"/><circle cx="54.8" cy="42.5" r="1.75"/><circle cx="35.7" cy="50.6" r="1.75"/><circle cx="42.9" cy="66.1" r="1.75"/><circle cx="41.5" cy="9.0" r="1.75"/><circle cx="12.7" cy="23.5" r="1.75"/><circle cx="24.8" cy="55.9" r="1.75"/><circle cx="61.5" cy="8.6" r="1.75"/><circle cx="58.0" cy="28.7" r="1.75"/><circle cx="36.4" cy="31.2" r="1.75"/><circle cx="47.2" cy="77.7" r="1.75"/><circle cx="15.5" cy="23.0" r="1.75"/><circle cx="53.8" cy="27.7" r="1.75"/><circle cx="72.9" cy="47.6" r="1.75"/><circle cx="29.3" cy="40.5" r="1.75"/><circle cx="56.6" cy="20.1" r="1.75"/><circle cx="11.5" cy="45.6" r="1.75"/><circle cx="66.9" cy="25.9" r="1.75"/><circle cx="41.7" cy="34.1" r="1.75"/><circle cx="31.7" cy="13.9" r="1.75"/><circle cx="68.5" cy="31.9" r="1.75"/><circle cx="47.7" cy="3.5" r="1.75"/><circle cx="22.1" cy="40.5" r="1.75"/><circle cx="15.2" cy="43.5" r="1.75"/><circle cx="49.7" cy="58.7" r="1.75"/><circle cx="45.0" cy="14.7" r="1.75"/><circle cx="8.7" cy="59.4" r="1.75"/><circle cx="39.3" cy="72.2" r="1.75"/><circle cx="0.8" cy="73.8" r="1.75"/><circle cx="81.8" cy="73.8" r="1.75"/><circle cx="55.3" cy="7.3" r="1.75"/><circle cx="55.8" cy="3.1" r="1.75"/><circle cx="1.6" cy="-0.7" r="1.75"/><circle cx="1.6" cy="80.3" r="1.75"/><circle cx="82.6" cy="-0.7" r="1.75"/><circle cx="82.6" cy="80.3" r="1.75"/><circle cx="71.5" cy="59.2" r="1.75"/><circle cx="44.1" cy="44.5" r="1.75"/><circle cx="52.3" cy="44.5" r="1.75"/><circle cx="57.7" cy="31.9" r="1.75"/><circle cx="21.5" cy="73.6" r="1.75"/><circle cx="38.3" cy="58.4" r="1.75"/><circle cx="75.1" cy="42.8" r="1.75"/><circle cx="30.9" cy="67.4" r="1.75"/><circle cx="70.6" cy="11.8" r="1.75"/><circle cx="4.1" cy="25.5" r="1.75"/><circle cx="18.1" cy="44.2" r="1.75"/><circle cx="7.2" cy="11.3" r="1.75"/><circle cx="28.6" cy="30.4" r="1.75"/><circle cx="2.5" cy="31.9" r="1.75"/><circle cx="19.8" cy="59.4" r="1.75"/><circle cx="1.3" cy="9.0" r="1.75"/><circle cx="82.3" cy="9.0" r="1.75"/><circle cx="9.8" cy="55.3" r="1.75"/><circle cx="72.4" cy="54.0" r="1.75"/><circle cx="77.2" cy="72.2" r="1.75"/><circle cx="46.6" cy="66.9" r="1.75"/><circle cx="64.3" cy="28.1" r="1.75"/><circle cx="5.7" cy="44.4" r="1.75"/><circle cx="22.2" cy="68.4" r="1.75"/><circle cx="34.3" cy="5.1" r="1.75"/><circle cx="57.4" cy="36.8" r="1.75"/><circle cx="15.7" cy="59.6" r="1.75"/><circle cx="8.3" cy="8.6" r="1.75"/><circle cx="57.5" cy="76.6" r="1.75"/><circle cx="73.9" cy="67.8" r="1.75"/><circle cx="71.8" cy="74.6" r="1.75"/><circle cx="43.0" cy="52.6" r="1.75"/><circle cx="53.4" cy="47.5" r="1.75"/><circle cx="-0.0" cy="37.0" r="1.75"/><circle cx="81.0" cy="37.0" r="1.75"/><circle cx="20.9" cy="36.8" r="1.75"/><circle cx="76.3" cy="46.7" r="1.75"/><circle cx="2.5" cy="58.7" r="1.75"/><circle cx="50.1" cy="8.5" r="1.75"/><circle cx="11.6" cy="77.5" r="1.75"/><circle cx="75.3" cy="51.8" r="1.75"/><circle cx="31.4" cy="49.3" r="1.75"/><circle cx="63.7" cy="21.1" r="1.75"/><circle cx="43.7" cy="22.3" r="1.75"/><circle cx="78.9" cy="-0.4" r="1.75"/><circle cx="78.9" cy="80.6" r="1.75"/><circle cx="35.6" cy="64.1" r="1.75"/><circle cx="75.3" cy="38.4" r="1.75"/><circle cx="71.8" cy="29.8" r="1.75"/><circle cx="73.7" cy="57.2" r="1.75"/><circle cx="64.9" cy="9.1" r="1.75"/><circle cx="28.6" cy="70.8" r="1.75"/><circle cx="69.0" cy="72.1" r="1.75"/><circle cx="47.5" cy="46.5" r="1.75"/><circle cx="19.5" cy="69.4" r="1.75"/><circle cx="17.2" cy="0.2" r="1.75"/><circle cx="17.2" cy="81.2" r="1.75"/><circle cx="67.3" cy="20.1" r="1.75"/><circle cx="63.3" cy="24.8" r="1.75"/><circle cx="5.3" cy="52.1" r="1.75"/><circle cx="72.2" cy="33.0" r="1.75"/><circle cx="31.1" cy="21.2" r="1.75"/><circle cx="19.3" cy="30.9" r="1.75"/><circle cx="36.1" cy="18.9" r="1.75"/><circle cx="60.7" cy="56.3" r="1.75"/><circle cx="24.4" cy="44.2" r="1.75"/><circle cx="40.0" cy="61.3" r="1.75"/><circle cx="-1.2" cy="57.9" r="1.75"/><circle cx="79.8" cy="57.9" r="1.75"/><circle cx="53.9" cy="38.4" r="1.75"/><circle cx="3.6" cy="13.3" r="1.75"/><circle cx="-1.5" cy="20.7" r="1.75"/><circle cx="79.5" cy="20.7" r="1.75"/><circle cx="69.8" cy="61.6" r="1.75"/><circle cx="28.3" cy="48.4" r="1.75"/><circle cx="57.8" cy="10.7" r="1.75"/><circle cx="78.0" cy="6.6" r="1.75"/><circle cx="30.6" cy="5.6" r="1.75"/><circle cx="25.0" cy="8.5" r="1.75"/><circle cx="75.0" cy="18.1" r="1.75"/><circle cx="25.1" cy="69.0" r="1.75"/><circle cx="67.6" cy="43.9" r="1.75"/><circle cx="64.0" cy="76.7" r="1.75"/><circle cx="9.9" cy="70.5" r="1.75"/><circle cx="69.5" cy="15.1" r="1.75"/><circle cx="57.6" cy="25.8" r="1.75"/><circle cx="66.4" cy="6.6" r="1.75"/><circle cx="30.9" cy="57.7" r="1.75"/><circle cx="-0.5" cy="28.9" r="1.75"/><circle cx="80.5" cy="28.9" r="1.75"/><circle cx="1.5" cy="19.3" r="1.75"/><circle cx="82.5" cy="19.3" r="1.75"/><circle cx="50.1" cy="1.9" r="1.75"/><circle cx="50.1" cy="82.9" r="1.75"/><circle cx="0.6" cy="42.7" r="1.75"/><circle cx="81.6" cy="42.7" r="1.75"/><circle cx="28.8" cy="0.0" r="1.75"/><circle cx="28.8" cy="81.0" r="1.75"/><circle cx="24.8" cy="75.9" r="1.75"/><circle cx="7.0" cy="1.5" r="1.75"/><circle cx="7.0" cy="82.5" r="1.75"/><circle cx="23.3" cy="71.4" r="1.75"/><circle cx="24.1" cy="15.1" r="1.75"/><circle cx="36.0" cy="2.5" r="1.75"/><circle cx="66.3" cy="74.1" r="1.75"/><circle cx="56.9" cy="67.3" r="1.75"/><circle cx="74.6" cy="11.4" r="1.75"/><circle cx="8.7" cy="14.8" r="1.75"/><circle cx="60.5" cy="30.0" r="1.75"/><circle cx="3.1" cy="38.2" r="1.75"/><circle cx="59.3" cy="49.1" r="1.75"/><circle cx="46.2" cy="28.1" r="1.75"/><circle cx="39.2" cy="36.5" r="1.75"/><circle cx="22.6" cy="46.5" r="1.75"/><circle cx="41.6" cy="6.1" r="1.75"/><circle cx="26.3" cy="39.1" r="1.75"/><circle cx="11.4" cy="52.7" r="1.75"/><circle cx="32.0" cy="23.9" r="1.75"/><circle cx="68.8" cy="68.5" r="1.75"/><circle cx="50.2" cy="48.1" r="1.75"/><circle cx="65.0" cy="2.5" r="1.75"/><circle cx="63.0" cy="60.4" r="1.75"/><circle cx="54.3" cy="52.5" r="1.75"/><circle cx="25.8" cy="62.4" r="1.75"/><circle cx="21.2" cy="43.4" r="1.75"/><circle cx="68.2" cy="53.9" r="1.75"/><circle cx="72.9" cy="8.1" r="1.75"/><circle cx="37.0" cy="6.4" r="1.75"/><circle cx="25.1" cy="31.9" r="1.75"/><circle cx="44.5" cy="8.7" r="1.75"/><circle cx="50.1" cy="66.5" r="1.75"/><circle cx="62.0" cy="15.6" r="1.75"/><circle cx="5.8" cy="22.7" r="1.75"/><circle cx="37.5" cy="12.6" r="1.75"/><circle cx="14.0" cy="50.2" r="1.75"/><circle cx="49.8" cy="5.6" r="1.75"/><circle cx="62.6" cy="-0.8" r="1.75"/><circle cx="62.6" cy="80.2" r="1.75"/><circle cx="0.5" cy="2.1" r="1.75"/><circle cx="81.5" cy="2.1" r="1.75"/><circle cx="46.3" cy="63.8" r="1.75"/><circle cx="33.9" cy="56.3" r="1.75"/><circle cx="51.5" cy="70.2" r="1.75"/><circle cx="16.2" cy="70.8" r="1.75"/><circle cx="53.3" cy="58.5" r="1.75"/><circle cx="38.3" cy="16.3" r="1.75"/><circle cx="53.8" cy="19.6" r="1.75"/><circle cx="44.7" cy="34.4" r="1.75"/><circle cx="59.3" cy="41.7" r="1.75"/><circle cx="-1.4" cy="70.5" r="1.75"/><circle cx="79.6" cy="70.5" r="1.75"/><circle cx="37.5" cy="21.5" r="1.75"/><circle cx="22.6" cy="25.7" r="1.75"/><circle cx="7.5" cy="72.7" r="1.75"/><circle cx="52.9" cy="2.5" r="1.75"/><circle cx="37.5" cy="66.3" r="1.75"/><circle cx="37.7" cy="69.3" r="1.75"/><circle cx="57.7" cy="54.4" r="1.75"/><circle cx="7.0" cy="54.6" r="1.75"/><circle cx="55.5" cy="45.3" r="1.75"/><circle cx="52.4" cy="14.3" r="1.75"/><circle cx="15.3" cy="32.3" r="1.75"/><circle cx="15.3" cy="78.7" r="1.75"/><circle cx="45.5" cy="19.1" r="1.75"/><circle cx="23.3" cy="22.4" r="1.75"/><circle cx="60.6" cy="11.5" r="1.75"/><circle cx="11.6" cy="15.7" r="1.75"/><circle cx="73.2" cy="0.3" r="1.75"/><circle cx="73.2" cy="81.3" r="1.75"/><circle cx="63.5" cy="69.7" r="1.75"/><circle cx="35.8" cy="76.2" r="1.75"/><circle cx="62.3" cy="66.1" r="1.75"/><circle cx="37.0" cy="61.3" r="1.75"/><circle cx="68.8" cy="47.2" r="1.75"/><circle cx="21.2" cy="49.1" r="1.75"/><circle cx="22.5" cy="30.2" r="1.75"/><circle cx="48.8" cy="29.9" r="1.75"/><circle cx="23.4" cy="-0.9" r="1.75"/><circle cx="23.4" cy="80.1" r="1.75"/><circle cx="44.9" cy="69.2" r="1.75"/><circle cx="29.4" cy="64.8" r="1.75"/><circle cx="38.7" cy="50.8" r="1.75"/><circle cx="8.6" cy="48.4" r="1.75"/><circle cx="35.0" cy="38.1" r="1.75"/><circle cx="42.3" cy="40.5" r="1.75"/><circle cx="44.3" cy="73.2" r="1.75"/><circle cx="24.7" cy="5.6" r="1.75"/><circle cx="7.7" cy="62.4" r="1.75"/><circle cx="70.8" cy="4.6" r="1.75"/><circle cx="13.0" cy="55.2" r="1.75"/><circle cx="38.9" cy="33.6" r="1.75"/><circle cx="0.1" cy="6.3" r="1.75"/><circle cx="81.1" cy="6.3" r="1.75"/><circle cx="18.8" cy="52.9" r="1.75"/><circle cx="76.0" cy="23.9" r="1.75"/><circle cx="42.5" cy="16.5" r="1.75"/><circle cx="27.2" cy="54.2" r="1.75"/></g></pattern></defs><rect width="242" height="242" rx="1.500" fill="url(#gp)"/></svg>
<div class="a" style="left:324px;top:778px;width:657px;height:29px;background:#f0f0f0"></div>
<div class="a" style="left:518px;top:789px;width:89px;height:1px;background:#8f8f8f;box-shadow:0 1px 0 #fff"></div>
<div class="a" style="left:532px;top:781px;width:5.5px;height:18px;border:1px solid #757575;border-radius:2.500px;background:linear-gradient(90deg,#ffffff,#e6e6e6)"></div>
<div class="a" style="left:615px;top:782px;width:1px;height:18px;background:#8a8a8a"></div>
<div class="t" style="left:623.5px;top:782.6px;line-height:18px;height:18px;font-size:14px;color:#383838;font-family:'Liberation Serif',serif;-webkit-text-stroke:.3px #383838;">A</div>
<svg class="a" style="left:634px;top:790px" width="4" height="3" viewBox="0 0 4 3"><path d="M0 0h4L2 2.500z" fill="#3f5fb0"/></svg>
<div class="t" style="left:646.0px;top:782.6px;line-height:18px;height:18px;font-size:14px;color:#4a68c2;font-family:'Liberation Serif',serif;-webkit-text-stroke:.3px #4a68c2;">A</div>
<div class="a" style="left:645px;top:797px;width:12px;height:1.5px;background:#7f98dc"></div>
<svg class="a" style="left:657px;top:790px" width="4" height="3" viewBox="0 0 4 3"><path d="M0 0h4L2 2.500z" fill="#3f5fb0"/></svg>
<div class="t" style="left:668.0px;top:783.7px;line-height:15px;height:15px;letter-spacing:-0.05px;">Arial Полужирный, 32</div>
<div class="a" style="left:785px;top:789px;width:90px;height:1px;background:#8f8f8f;box-shadow:0 1px 0 #fff"></div>
<div class="a" style="left:827px;top:781px;width:5.5px;height:18px;border:1px solid #757575;border-radius:2.500px;background:linear-gradient(90deg,#ffffff,#e6e6e6)"></div>
<div class="a" style="left:504px;top:784px;width:4px;height:1px;background:#666"></div>
<div class="a" style="left:507px;top:784px;width:1px;height:5px;background:#777"></div>
<div class="a" style="left:880px;top:783px;width:16px;height:16px;background:#000"></div>
<svg class="a" style="left:899px;top:782px" width="17" height="17" viewBox="0 0 17 17"><rect x=".6" y="2.500" width="12.500" height="13" rx="1.200" fill="#dfe9f3" stroke="#5f80a8"/><rect x="2" y="4" width="9.700" height="10.200" fill="#f6f9fc"/><path d="M3.800 3.300C3.800 1.600 5 .7 6.800.7s3 .9 3 2.600z" fill="#f3bd4a" stroke="#c88a1e" stroke-width=".7"/><path d="M3.500 6.500h3M3.500 8.700h2.500M3.500 10.900h2.500" stroke="#7fa3cc" stroke-width="1"/><path d="M9.800 6.600c-1.500.4-2.300 1.900-1.700 3.400l.3.600 4.600 4.600c.7.700 2 .5 2.400-.5.300-.7.100-1.300-.3-1.700l-2.300-2.300c.4-1-.2-2.400-1.200-2.800l-.2 1.600-1.400.3-.7-1.100z" fill="#f2f4f7" stroke="#5b7696" stroke-width=".8" stroke-linejoin="round"/></svg>
<svg class="a" style="left:954px;top:787px" width="10" height="10.500" viewBox="0 0 11 11"><path d="M5.500 1L1.300 5.600h8.400z" fill="#b4b4b4" stroke="#444" stroke-width="1" stroke-linejoin="round"/><rect x="1" y="5.600" width="9" height="4.400" rx="1.200" fill="#fdfdfd" stroke="#444" stroke-width="1"/><path d="M3 7.800h5" stroke="#444" stroke-width="1.100"/></svg>

<div class="a" style="left:986px;top:92px;width:275px;height:108px;border:1px solid #8c8e90;background:#f0f0f0"></div>
<div class="a" style="left:987px;top:93px;width:273px;height:19px;background:linear-gradient(#f2f2f2 0,#ebebeb 45%,#dddddd 55%,#d3d3d3 100%);"></div>
<div class="a" style="left:987px;top:112px;width:273px;height:1px;background:#8c8e90"></div>
<div class="a" style="left:987px;top:93px;width:74px;height:19px;background:linear-gradient(#f3f3f3,#fcfcfc);border-right:1px solid #8c8e90"></div>
<div class="t b" style="left:991.3px;top:95.7px;line-height:15px;height:15px;letter-spacing:0.12px;">Контекст</div>
<svg class="a" style="left:1047px;top:98px" width="9" height="9" viewBox="0 0 9 9"><path d="M2 2l5 5M7 2l-5 5" stroke="#454545" stroke-width="2.500" stroke-linecap="round" fill="none"/><path d="M2 2l5 5M7 2l-5 5" stroke="#f4f4f4" stroke-width=".8" stroke-linecap="round" fill="none"/></svg>
<div class="a" style="left:1245px;top:98px;width:10px;height:9px;border:1px solid #4a4a4a;background:linear-gradient(#fdfdfd,#dcdcdc);border-radius:1px"><div class="a" style="left:1px;top:4px;width:6px;height:2px;background:#2a2a2a"></div></div>
<div class="t b" style="left:994.0px;top:119.7px;line-height:15px;height:15px;letter-spacing:0.61px;">Узлы:</div>
<div class="t" style="left:1041.0px;top:119.7px;line-height:15px;height:15px;letter-spacing:-0.18px;">281903</div>
<div class="t b" style="left:994.0px;top:139.7px;line-height:15px;height:15px;letter-spacing:0.29px;">Рёбра:</div>
<div class="t" style="left:1041.0px;top:139.7px;line-height:15px;height:15px;letter-spacing:-0.12px;">2312497</div>
<div class="t" style="left:994.0px;top:159.4px;line-height:15px;height:15px;letter-spacing:-0.09px;">Ориентированный граф</div>
<svg class="a" style="left:1239px;top:117px" width="16" height="16" viewBox="0 0 16 16"><defs><radialGradient id="gg" cx=".4" cy=".3" r=".8"><stop offset="0" stop-color="#c6f08a"/><stop offset=".6" stop-color="#6cc33a"/><stop offset="1" stop-color="#3f9a22"/></radialGradient></defs><circle cx="8" cy="8" r="7.300" fill="url(#gg)" stroke="#3c8a22" stroke-width=".8"/><path d="M8 8h7.300A7.300 7.300 0 0 1 13 13.500z" fill="#1f6a14"/></svg>
<div class="a" style="left:986px;top:204px;width:275px;height:604px;border:1px solid #8c8e90;background:#f0f0f0"></div>
<div class="a" style="left:987px;top:205px;width:273px;height:19px;background:linear-gradient(#f2f2f2 0,#ebebeb 45%,#dddddd 55%,#d3d3d3 100%);"></div>
<div class="a" style="left:987px;top:224px;width:273px;height:1px;background:#8c8e90"></div>
<div class="a" style="left:1072px;top:205px;width:1px;height:19px;background:#8c8e90"></div>
<div class="a" style="left:1073px;top:205px;width:75px;height:19px;background:linear-gradient(#eaf3fb,#f4f9fd);border:1px solid #5d93c4;border-bottom:none;border-top:none"></div>
<div class="a" style="left:1073px;top:205px;width:75px;height:1px;background:#5d93c4"></div>
<div class="t b" style="left:991.3px;top:207.7px;line-height:15px;height:15px;letter-spacing:-0.09px;">Статистики</div>
<div class="t b" style="left:1077.4px;top:207.7px;line-height:15px;height:15px;letter-spacing:-0.26px;">Фильтры</div>
<svg class="a" style="left:1133px;top:210px" width="9" height="9" viewBox="0 0 9 9"><path d="M2 2l5 5M7 2l-5 5" stroke="#454545" stroke-width="2.500" stroke-linecap="round" fill="none"/><path d="M2 2l5 5M7 2l-5 5" stroke="#f4f4f4" stroke-width=".8" stroke-linecap="round" fill="none"/></svg>
<div class="a" style="left:1245px;top:210px;width:10px;height:9px;border:1px solid #4a4a4a;background:linear-gradient(#fdfdfd,#dcdcdc);border-radius:1px"><div class="a" style="left:1px;top:4px;width:6px;height:2px;background:#2a2a2a"></div></div>
<div class="t" style="left:989.8px;top:229.7px;line-height:15px;height:15px;letter-spacing:-0.14px;">Сбросить</div>
<div class="a" style="left:1044px;top:228px;width:1px;height:17px;background:#8a8a8a"></div>
<svg class="a" style="left:1051px;top:229px" width="17" height="16" viewBox="0 0 17 16"><rect x=".5" y=".5" width="12" height="14" fill="#fff" stroke="#5b86b4"/><rect x="1" y="1" width="11" height="2.500" fill="#8ec6ee"/><path d="M1 5.500h11M1 8h11M1 10.500h11M1 13h11M4 1v14M8 1v14" stroke="#8ab4d6" stroke-width=".7"/><path d="M9 7.500h4V5.500l3.500 3.500L13 12.500v-2H9z" fill="#fafafa" stroke="#8a8f98" stroke-width=".7"/></svg>
<svg class="a" style="left:1073px;top:229px" width="17" height="16" viewBox="0 0 17 16"><rect x=".5" y="2.500" width="12" height="12" fill="#fafafa" stroke="#8a8a8a"/><rect x="1" y="3" width="11" height="2.500" fill="#cfcfcf"/><path d="M9 8.500h4V6.500l3.500 3.500L13 13.500v-2H9z" fill="#f4f4f4" stroke="#7a7a7a" stroke-width=".7"/></svg>
<div class="t b" style="left:1099.4px;top:228.8px;line-height:15.5px;height:15.5px;font-size:11.5px;color:#222;font-family:'Liberation Serif',serif;">A</div>
<svg class="a" style="left:1107px;top:233px" width="8" height="8" viewBox="0 0 8 8"><path d="M.5 3h3V1L7.500 4 3.500 7V5h-3z" fill="#fff" stroke="#777" stroke-width=".7"/></svg>
<div class="a" style="left:987px;top:249px;width:273px;height:1px;background:#9fb6cc"></div>
<div class="a" style="left:987px;top:250px;width:257px;height:262px;background:#fff"></div>
<div class="a" style="left:1244px;top:250px;width:16px;height:262px;background:#f0f0f0"></div>
<svg class="a" style="left:1249px;top:257px" width="7" height="4" viewBox="0 0 7 4"><path d="M0 4h7L3.500 0z" fill="#505050"/></svg>
<svg class="a" style="left:1249px;top:499px" width="7" height="4" viewBox="0 0 7 4"><path d="M0 0h7L3.500 4z" fill="#505050"/></svg>
<div class="a" style="left:1245px;top:268px;width:14px;height:191px;border:1px solid #979797;border-radius:2px;background:linear-gradient(90deg,#f4f4f4 0,#e6e6e6 45%,#d2d2d2 55%,#cacaca 100%)"></div>
<div class="a" style="left:1249px;top:359px;width:7px;height:1px;background:#555;box-shadow:0 2px 0 #555,0 4px 0 #555,0 6px 0 #555"></div>
<svg class="a" style="left:988px;top:251px" width="16" height="14" viewBox="0 0 16 14"><defs><linearGradient id="fg2" x1="0" y1="0" x2="0" y2="1"><stop offset="0" stop-color="#faeebc"/><stop offset="1" stop-color="#ecc96a"/></linearGradient></defs><path d="M.5 13.500V3h8.500l1.300-2.300h4l1.200 2.300v10.500z" fill="url(#fg2)" stroke="#d0a84c" stroke-width=".9"/><path d="M11 1.700h3" stroke="#6fc0c0" stroke-width="1"/></svg>
<div class="t" style="left:1011.3px;top:251.7px;line-height:15px;height:15px;letter-spacing:0.02px;">Библиотека</div>
<div class="a" style="left:995px;top:268px;width:1px;height:243px;background:repeating-linear-gradient(180deg,#8a8a8a 0,#8a8a8a 1px,transparent 1px,transparent 2px)"></div>
<div class="a" style="left:1014px;top:283px;width:1px;height:176px;background:repeating-linear-gradient(180deg,#8a8a8a 0,#8a8a8a 1px,transparent 1px,transparent 2px)"></div>
<div class="a" style="left:1033px;top:301px;width:1px;height:12px;background:repeating-linear-gradient(180deg,#8a8a8a 0,#8a8a8a 1px,transparent 1px,transparent 2px)"></div>
<div class="a" style="left:1033px;top:355px;width:1px;height:30px;background:repeating-linear-gradient(180deg,#8a8a8a 0,#8a8a8a 1px,transparent 1px,transparent 2px)"></div>
<div class="a" style="left:1000px;top:277px;width:7px;height:1px;background:repeating-linear-gradient(90deg,#8a8a8a 0,#8a8a8a 1px,transparent 1px,transparent 2px)"></div>
<div class="a" style="left:991px;top:273px;width:9px;height:9px;border:1px solid #959aa4;border-radius:2px;background:linear-gradient(135deg,#fff,#d8dade)"><div class="a" style="left:1px;top:3px;width:5px;height:1px;background:#2f3f85"></div></div>
<svg class="a" style="left:1010px;top:273px" width="10" height="9" viewBox="0 0 10 9"><defs><linearGradient id="fg" x1="0" y1="0" x2="0" y2="1"><stop offset="0" stop-color="#f8ebb8"/><stop offset="1" stop-color="#e6c468"/></linearGradient></defs><path d="M.5 8.300V2.500h4.800l.9-1.700h2.600l.7 1.700v5.800z" fill="url(#fg)" stroke="#d2ae5c" stroke-width=".7"/><path d="M6.300 1.600h2.200" stroke="#fff" stroke-width=".7"/></svg>
<div class="t" style="left:1030.5px;top:269.7px;line-height:15px;height:15px;letter-spacing:0.14px;">Атрибуты</div>
<div class="a" style="left:1019px;top:295px;width:6.5px;height:1px;background:repeating-linear-gradient(90deg,#8a8a8a 0,#8a8a8a 1px,transparent 1px,transparent 2px)"></div>
<div class="a" style="left:1010px;top:291px;width:9px;height:9px;border:1px solid #959aa4;border-radius:2px;background:linear-gradient(135deg,#fff,#d8dade)"><div class="a" style="left:1px;top:3px;width:5px;height:1px;background:#2f3f85"></div></div>
<svg class="a" style="left:1028.5px;top:291px" width="10" height="9" viewBox="0 0 10 9"><defs><linearGradient id="fg" x1="0" y1="0" x2="0" y2="1"><stop offset="0" stop-color="#f8ebb8"/><stop offset="1" stop-color="#e6c468"/></linearGradient></defs><path d="M.5 8.300V2.500h4.800l.9-1.700h2.600l.7 1.700v5.800z" fill="url(#fg)" stroke="#d2ae5c" stroke-width=".7"/><path d="M6.300 1.600h2.200" stroke="#fff" stroke-width=".7"/></svg>
<div class="t" style="left:1049.0px;top:287.7px;line-height:15px;height:15px;letter-spacing:-0.27px;">Внешние рёбра</div>
<div class="a" style="left:1033px;top:313px;width:12px;height:1px;background:repeating-linear-gradient(90deg,#8a8a8a 0,#8a8a8a 1px,transparent 1px,transparent 2px)"></div>
<svg class="a" style="left:1048px;top:308px" width="10" height="11" viewBox="0 0 10 11"><path d="M.6 .8h8.800L6 5v5H4V5z" fill="#b9b9b9" stroke="#6f6f6f" stroke-width=".8" stroke-linejoin="round"/><path d="M2 1.800h6" stroke="#e8e8e8" stroke-width=".8"/></svg>
<div class="t" style="left:1068.0px;top:305.7px;line-height:15px;height:15px;letter-spacing:-0.21px;">Modularity Class</div>
<div class="a" style="left:1014px;top:331px;width:11.5px;height:1px;background:repeating-linear-gradient(90deg,#8a8a8a 0,#8a8a8a 1px,transparent 1px,transparent 2px)"></div>
<svg class="a" style="left:1028.5px;top:327px" width="10" height="9" viewBox="0 0 10 9"><defs><linearGradient id="fg" x1="0" y1="0" x2="0" y2="1"><stop offset="0" stop-color="#f8ebb8"/><stop offset="1" stop-color="#e6c468"/></linearGradient></defs><path d="M.5 8.300V2.500h4.800l.9-1.700h2.600l.7 1.700v5.800z" fill="url(#fg)" stroke="#d2ae5c" stroke-width=".7"/><path d="M6.300 1.600h2.200" stroke="#fff" stroke-width=".7"/></svg>
<div class="t" style="left:1049.0px;top:323.7px;line-height:15px;height:15px;letter-spacing:-0.09px;">Внутренние рёбра</div>
<div class="a" style="left:1019px;top:349px;width:6.5px;height:1px;background:repeating-linear-gradient(90deg,#8a8a8a 0,#8a8a8a 1px,transparent 1px,transparent 2px)"></div>
<div class="a" style="left:1010px;top:345px;width:9px;height:9px;border:1px solid #959aa4;border-radius:2px;background:linear-gradient(135deg,#fff,#d8dade)"><div class="a" style="left:1px;top:3px;width:5px;height:1px;background:#2f3f85"></div></div>
<svg class="a" style="left:1028.5px;top:345px" width="10" height="9" viewBox="0 0 10 9"><defs><linearGradient id="fg" x1="0" y1="0" x2="0" y2="1"><stop offset="0" stop-color="#f8ebb8"/><stop offset="1" stop-color="#e6c468"/></linearGradient></defs><path d="M.5 8.300V2.500h4.800l.9-1.700h2.600l.7 1.700v5.800z" fill="url(#fg)" stroke="#d2ae5c" stroke-width=".7"/><path d="M6.300 1.600h2.200" stroke="#fff" stroke-width=".7"/></svg>
<div class="t" style="left:1049.0px;top:341.7px;line-height:15px;height:15px;letter-spacing:0.03px;">Диапазон</div>
<div class="a" style="left:1033px;top:367px;width:12px;height:1px;background:repeating-linear-gradient(90deg,#8a8a8a 0,#8a8a8a 1px,transparent 1px,transparent 2px)"></div>
<svg class="a" style="left:1048px;top:362px" width="10" height="11" viewBox="0 0 10 11"><path d="M.6 .8h8.800L6 5v5H4V5z" fill="#b9b9b9" stroke="#6f6f6f" stroke-width=".8" stroke-linejoin="round"/><path d="M2 1.800h6" stroke="#e8e8e8" stroke-width=".8"/></svg>
<div class="a" style="left:1067.5px;top:358px;width:156px;height:18px;background:#e5e5e5"></div>
<div class="t" style="left:1068.0px;top:359.7px;line-height:15px;height:15px;letter-spacing:-0.21px;">Modularity Class</div>
<div class="t i" style="left:1149.0px;top:359.7px;line-height:15px;height:15px;letter-spacing:0.25px;">Integer (Узел)</div>
<div class="a" style="left:1033px;top:385px;width:12px;height:1px;background:repeating-linear-gradient(90deg,#8a8a8a 0,#8a8a8a 1px,transparent 1px,transparent 2px)"></div>
<svg class="a" style="left:1048px;top:380px" width="10" height="11" viewBox="0 0 10 11"><path d="M.6 .8h8.800L6 5v5H4V5z" fill="#b9b9b9" stroke="#6f6f6f" stroke-width=".8" stroke-linejoin="round"/><path d="M2 1.800h6" stroke="#e8e8e8" stroke-width=".8"/></svg>
<div class="t" style="left:1068.0px;top:377.7px;line-height:15px;height:15px;">Weight</div>
<div class="t i" style="left:1105.0px;top:377.7px;line-height:15px;height:15px;letter-spacing:-0.12px;color:#9a9a9a;">Float (Ребро)</div>
<div class="a" style="left:1019px;top:403px;width:6.5px;height:1px;background:repeating-linear-gradient(90deg,#8a8a8a 0,#8a8a8a 1px,transparent 1px,transparent 2px)"></div>
<div class="a" style="left:1010px;top:399px;width:9px;height:9px;border:1px solid #959aa4;border-radius:2px;background:linear-gradient(135deg,#fff,#d8dade)"><div class="a" style="left:1px;top:3px;width:5px;height:1px;background:#2f3f85"></div><div class="a" style="left:3px;top:1px;width:1px;height:5px;background:#2f3f85"></div></div>
<svg class="a" style="left:1028.5px;top:399px" width="10" height="9" viewBox="0 0 10 9"><defs><linearGradient id="fg" x1="0" y1="0" x2="0" y2="1"><stop offset="0" stop-color="#f8ebb8"/><stop offset="1" stop-color="#e6c468"/></linearGradient></defs><path d="M.5 8.300V2.500h4.800l.9-1.700h2.600l.7 1.700v5.800z" fill="url(#fg)" stroke="#d2ae5c" stroke-width=".7"/><path d="M6.300 1.600h2.200" stroke="#fff" stroke-width=".7"/></svg>
<div class="t" style="left:1049.0px;top:395.7px;line-height:15px;height:15px;letter-spacing:-0.17px;">Не ноль</div>
<div class="a" style="left:1019px;top:421px;width:6.5px;height:1px;background:repeating-linear-gradient(90deg,#8a8a8a 0,#8a8a8a 1px,transparent 1px,transparent 2px)"></div>
<div class="a" style="left:1010px;top:417px;width:9px;height:9px;border:1px solid #959aa4;border-radius:2px;background:linear-gradient(135deg,#fff,#d8dade)"><div class="a" style="left:1px;top:3px;width:5px;height:1px;background:#2f3f85"></div><div class="a" style="left:3px;top:1px;width:1px;height:5px;background:#2f3f85"></div></div>
<svg class="a" style="left:1028.5px;top:417px" width="10" height="9" viewBox="0 0 10 9"><defs><linearGradient id="fg" x1="0" y1="0" x2="0" y2="1"><stop offset="0" stop-color="#f8ebb8"/><stop offset="1" stop-color="#e6c468"/></linearGradient></defs><path d="M.5 8.300V2.500h4.800l.9-1.700h2.600l.7 1.700v5.800z" fill="url(#fg)" stroke="#d2ae5c" stroke-width=".7"/><path d="M6.300 1.600h2.200" stroke="#fff" stroke-width=".7"/></svg>
<div class="t" style="left:1049.0px;top:413.7px;line-height:15px;height:15px;letter-spacing:-0.04px;">По значению</div>
<div class="a" style="left:1019px;top:439px;width:6.5px;height:1px;background:repeating-linear-gradient(90deg,#8a8a8a 0,#8a8a8a 1px,transparent 1px,transparent 2px)"></div>
<div class="a" style="left:1010px;top:435px;width:9px;height:9px;border:1px solid #959aa4;border-radius:2px;background:linear-gradient(135deg,#fff,#d8dade)"><div class="a" style="left:1px;top:3px;width:5px;height:1px;background:#2f3f85"></div><div class="a" style="left:3px;top:1px;width:1px;height:5px;background:#2f3f85"></div></div>
<svg class="a" style="left:1028.5px;top:435px" width="10" height="9" viewBox="0 0 10 9"><defs><linearGradient id="fg" x1="0" y1="0" x2="0" y2="1"><stop offset="0" stop-color="#f8ebb8"/><stop offset="1" stop-color="#e6c468"/></linearGradient></defs><path d="M.5 8.300V2.500h4.800l.9-1.700h2.600l.7 1.700v5.800z" fill="url(#fg)" stroke="#d2ae5c" stroke-width=".7"/><path d="M6.300 1.600h2.200" stroke="#fff" stroke-width=".7"/></svg>
<div class="t" style="left:1049.0px;top:431.7px;line-height:15px;height:15px;letter-spacing:-0.19px;">По мощности класса</div>
<div class="a" style="left:1014px;top:457px;width:11.5px;height:1px;background:repeating-linear-gradient(90deg,#8a8a8a 0,#8a8a8a 1px,transparent 1px,transparent 2px)"></div>
<svg class="a" style="left:1028.5px;top:453px" width="10" height="9" viewBox="0 0 10 9"><defs><linearGradient id="fg" x1="0" y1="0" x2="0" y2="1"><stop offset="0" stop-color="#f8ebb8"/><stop offset="1" stop-color="#e6c468"/></linearGradient></defs><path d="M.5 8.300V2.500h4.800l.9-1.700h2.600l.7 1.700v5.800z" fill="url(#fg)" stroke="#d2ae5c" stroke-width=".7"/><path d="M6.300 1.600h2.200" stroke="#fff" stroke-width=".7"/></svg>
<div class="t" style="left:1049.0px;top:449.7px;line-height:15px;height:15px;letter-spacing:-0.20px;">Разбиение</div>
<div class="a" style="left:1000px;top:475px;width:7px;height:1px;background:repeating-linear-gradient(90deg,#8a8a8a 0,#8a8a8a 1px,transparent 1px,transparent 2px)"></div>
<div class="a" style="left:991px;top:471px;width:9px;height:9px;border:1px solid #959aa4;border-radius:2px;background:linear-gradient(135deg,#fff,#d8dade)"><div class="a" style="left:1px;top:3px;width:5px;height:1px;background:#2f3f85"></div><div class="a" style="left:3px;top:1px;width:1px;height:5px;background:#2f3f85"></div></div>
<svg class="a" style="left:1010px;top:471px" width="10" height="9" viewBox="0 0 10 9"><defs><linearGradient id="fg" x1="0" y1="0" x2="0" y2="1"><stop offset="0" stop-color="#f8ebb8"/><stop offset="1" stop-color="#e6c468"/></linearGradient></defs><path d="M.5 8.300V2.500h4.800l.9-1.700h2.600l.7 1.700v5.800z" fill="url(#fg)" stroke="#d2ae5c" stroke-width=".7"/><path d="M6.300 1.600h2.200" stroke="#fff" stroke-width=".7"/></svg>
<div class="t" style="left:1030.5px;top:467.7px;line-height:15px;height:15px;letter-spacing:-0.08px;">Динамика</div>
<div class="a" style="left:1000px;top:493px;width:7px;height:1px;background:repeating-linear-gradient(90deg,#8a8a8a 0,#8a8a8a 1px,transparent 1px,transparent 2px)"></div>
<div class="a" style="left:991px;top:489px;width:9px;height:9px;border:1px solid #959aa4;border-radius:2px;background:linear-gradient(135deg,#fff,#d8dade)"><div class="a" style="left:1px;top:3px;width:5px;height:1px;background:#2f3f85"></div><div class="a" style="left:3px;top:1px;width:1px;height:5px;background:#2f3f85"></div></div>
<svg class="a" style="left:1010px;top:489px" width="10" height="9" viewBox="0 0 10 9"><defs><linearGradient id="fg" x1="0" y1="0" x2="0" y2="1"><stop offset="0" stop-color="#f8ebb8"/><stop offset="1" stop-color="#e6c468"/></linearGradient></defs><path d="M.5 8.300V2.500h4.800l.9-1.700h2.600l.7 1.700v5.800z" fill="url(#fg)" stroke="#d2ae5c" stroke-width=".7"/><path d="M6.300 1.600h2.200" stroke="#fff" stroke-width=".7"/></svg>
<div class="t" style="left:1030.5px;top:485.7px;line-height:15px;height:15px;letter-spacing:-0.08px;">Операторы</div>
<div class="a" style="left:987px;top:503px;width:257px;height:8px;overflow:hidden"><div class="a" style="left:-987px;top:-503px"><div class="a" style="left:1000px;top:511px;width:7px;height:1px;background:repeating-linear-gradient(90deg,#8a8a8a 0,#8a8a8a 1px,transparent 1px,transparent 2px)"></div>
<div class="a" style="left:991px;top:507px;width:9px;height:9px;border:1px solid #959aa4;border-radius:2px;background:linear-gradient(135deg,#fff,#d8dade)"><div class="a" style="left:1px;top:3px;width:5px;height:1px;background:#2f3f85"></div><div class="a" style="left:3px;top:1px;width:1px;height:5px;background:#2f3f85"></div></div>
<svg class="a" style="left:1010px;top:507px" width="10" height="9" viewBox="0 0 10 9"><defs><linearGradient id="fg" x1="0" y1="0" x2="0" y2="1"><stop offset="0" stop-color="#f8ebb8"/><stop offset="1" stop-color="#e6c468"/></linearGradient></defs><path d="M.5 8.300V2.500h4.800l.9-1.700h2.600l.7 1.700v5.800z" fill="url(#fg)" stroke="#d2ae5c" stroke-width=".7"/><path d="M6.300 1.600h2.200" stroke="#fff" stroke-width=".7"/></svg>
<div class="t" style="left:1030.5px;top:503.7px;line-height:15px;height:15px;letter-spacing:-0.40px;">Рёбра</div>
</div></div>
<div class="a" style="left:987px;top:512px;width:273px;height:1px;background:#8c8e90"></div>
<div class="a" style="left:987px;top:513px;width:273px;height:164px;background:#fff"></div>
<div class="a" style="left:0;top:1px"><svg class="a" style="left:989px;top:515px" width="14" height="16" viewBox="0 0 14 16"><path d="M.7 1h12.600L8.500 7.500v7.500h-3V7.500z" fill="#c4c4c4" stroke="#6c6c6c" stroke-width=".9" stroke-linejoin="round"/><path d="M2.500 2.200h9" stroke="#efefef" stroke-width="1"/></svg>
<div class="t" style="left:1011.4px;top:514.2px;line-height:15px;height:15px;letter-spacing:-0.10px;">Наборы фильтров</div>
<div class="a" style="left:995px;top:531px;width:1px;height:9px;background:repeating-linear-gradient(180deg,#8a8a8a 0,#8a8a8a 1px,transparent 1px,transparent 2px)"></div>
<div class="a" style="left:991px;top:536px;width:9px;height:9px;border:1px solid #959aa4;border-radius:2px;background:linear-gradient(135deg,#fff,#d8dade)"><div class="a" style="left:1px;top:3px;width:5px;height:1px;background:#2f3f85"></div></div>
<div class="a" style="left:1000px;top:540px;width:8px;height:1px;background:repeating-linear-gradient(90deg,#8a8a8a 0,#8a8a8a 1px,transparent 1px,transparent 2px)"></div>
<svg class="a" style="left:1010px;top:535px" width="10" height="11" viewBox="0 0 10 11"><path d="M.6 .8h8.800L6 5v5H4V5z" fill="#b9b9b9" stroke="#6f6f6f" stroke-width=".8" stroke-linejoin="round"/><path d="M2 1.800h6" stroke="#e8e8e8" stroke-width=".8"/></svg>
<div class="t" style="left:1030.9px;top:532.2px;line-height:15px;height:15px;letter-spacing:-0.11px;">Диапазон (Modularity Class)</div>
<div class="a" style="left:1014px;top:546px;width:1px;height:66px;background:repeating-linear-gradient(180deg,#8a8a8a 0,#8a8a8a 1px,transparent 1px,transparent 2px)"></div>
<div class="a" style="left:1010px;top:554px;width:9px;height:9px;border:1px solid #959aa4;border-radius:2px;background:linear-gradient(135deg,#fff,#d8dade)"><div class="a" style="left:1px;top:3px;width:5px;height:1px;background:#2f3f85"></div></div>
<div class="a" style="left:1019px;top:558px;width:5px;height:1px;background:repeating-linear-gradient(90deg,#8a8a8a 0,#8a8a8a 1px,transparent 1px,transparent 2px)"></div>
<svg class="a" style="left:1025px;top:553px" width="10" height="10" viewBox="0 0 10 10"><circle cx="5.500" cy="5" r="3.300" fill="none" stroke="#555" stroke-width="1"/><circle cx="5.500" cy="5" r="1" fill="#555"/><path d="M1 8.500l2-1.500" stroke="#555" stroke-width="1.200"/></svg>
<div class="t" style="left:1049.2px;top:550.2px;line-height:15px;height:15px;letter-spacing:-0.18px;">Параметры</div>
<div class="a" style="left:1033px;top:564px;width:1px;height:30px;background:repeating-linear-gradient(180deg,#8a8a8a 0,#8a8a8a 1px,transparent 1px,transparent 2px)"></div>
<div class="a" style="left:1033px;top:576px;width:12px;height:1px;background:repeating-linear-gradient(90deg,#8a8a8a 0,#8a8a8a 1px,transparent 1px,transparent 2px)"></div>
<div class="a" style="left:1051px;top:574px;width:4px;height:4px;background:#8fcf6f;border:1px solid #5a9a3a"></div>
<div class="t" style="left:1068.4px;top:568.2px;line-height:15px;height:15px;letter-spacing:-0.08px;">column: Modularity Class (Integer)</div>
<div class="a" style="left:1033px;top:594px;width:12px;height:1px;background:repeating-linear-gradient(90deg,#8a8a8a 0,#8a8a8a 1px,transparent 1px,transparent 2px)"></div>
<div class="a" style="left:1051px;top:592px;width:4px;height:4px;background:#8fcf6f;border:1px solid #5a9a3a"></div>
<div class="t" style="left:1068.4px;top:586.2px;line-height:15px;height:15px;letter-spacing:0.05px;">range: 0 - 621</div>
<div class="a" style="left:1014px;top:612px;width:12px;height:1px;background:repeating-linear-gradient(90deg,#8a8a8a 0,#8a8a8a 1px,transparent 1px,transparent 2px)"></div>
<svg class="a" style="left:1027px;top:604px" width="16" height="16" viewBox="0 0 16 16"><circle cx="7" cy="7" r="6.200" fill="#f6d0d0" stroke="#d65050" stroke-width="1.600"/><circle cx="7" cy="7" r="3.500" fill="#fbecec" stroke="#de6464" stroke-width="1.500"/><circle cx="7" cy="7" r="1.300" fill="#c83030"/><circle cx="12" cy="12.500" r="3.300" fill="#3fae3f"/><path d="M12 10.500v4M10 12.500h4" stroke="#fff" stroke-width="1.200"/></svg>
<div class="t i" style="left:1049.2px;top:604.2px;line-height:15px;height:15px;letter-spacing:-0.40px;">Перетащите подфильтр сюда</div>
</div><div class="a" style="left:994px;top:690px;width:258px;height:79px;border:1px solid #d5dfe5;border-radius:3px"></div>
<div class="a" style="left:998px;top:684px;width:200px;height:14px;background:#f0f0f0"></div>
<div class="t" style="left:1000.4px;top:682.1px;line-height:15px;height:15px;letter-spacing:-0.06px;">Диапазон (Modularity Class) Настройки</div>
<div class="a" style="left:1004px;top:708px;width:237px;height:4px;background:#4ec3ea;border-top:1px solid #7fd6f3"></div>
<div class="a" style="left:1000px;top:701px;width:5px;height:18px;border:1px solid #808080;border-radius:2px;background:linear-gradient(90deg,#fff,#e4e4e4)"></div>
<div class="a" style="left:1239px;top:701px;width:5px;height:18px;border:1px solid #808080;border-radius:2px;background:linear-gradient(90deg,#fff,#e4e4e4)"></div>
<div class="t" style="left:1003.2px;top:721.7px;line-height:15px;height:15px;color:#7a7a7a;">0</div>
<div class="t" style="left:1223.5px;top:721.7px;line-height:15px;height:15px;letter-spacing:-0.02px;color:#7a7a7a;">621</div>
<svg class="a" style="left:1021px;top:737px" width="228" height="29" viewBox="0 0 228 29"><path d="M0 28.9 L1 28.2 L18 27.6 L32.9 27 L50 26.1 L56.4 24 L64.9 22.9 L75.5 20.3 L84 19.1 L96.8 18.4 L118.2 17.6 L139.5 16.7 L156.5 15.4 L171.4 13.7 L182 12.3 L192.7 10.8 L200.2 9.1 L203.4 6.5 L209.8 5.2 L216.2 4.2 L221.5 2.7 L224.7 1 L228 0 L228 28.9z" fill="#3b4043"/></svg>
<div class="a" style="left:1037px;top:779px;width:87px;height:23px;border:1px solid #707070;border-radius:3px;background:linear-gradient(#f3f3f3 0,#ebebeb 48%,#dddddd 52%,#d0d0d0 100%);box-shadow:inset 0 0 0 1px rgba(255,255,255,.7)"></div>
<div class="a" style="left:1130px;top:779px;width:125px;height:23px;border:1px solid #707070;border-radius:3px;background:linear-gradient(#f3f3f3 0,#ebebeb 48%,#dddddd 52%,#d0d0d0 100%);box-shadow:inset 0 0 0 1px rgba(255,255,255,.7)"></div>
<div class="a" style="left:1046px;top:783px;width:14px;height:14px;background:repeating-linear-gradient(135deg,#a9c3db 0,#a9c3db 1px,#d9e7f3 1px,#d9e7f3 2.500px);opacity:.9"></div>
<div class="t" style="left:1064.3px;top:782.7px;line-height:15px;height:15px;letter-spacing:-0.04px;">Выбрать</div>
<svg class="a" style="left:1142px;top:783px" width="11" height="15" viewBox="0 0 11 15"><path d="M1.500 1.500v12L9.500 7.500z" fill="#d6f2b8" stroke="#3fa82f" stroke-width="1.300" stroke-linejoin="round"/></svg>
<div class="t" style="left:1157.0px;top:782.7px;line-height:15px;height:15px;letter-spacing:0.21px;">Отфильтровать</div>

<div class="a" style="left:5px;top:811px;width:1259px;height:1px;background:#b4b4b4"></div>
<div class="a" style="left:1107px;top:817px;width:16px;height:12px;background:#fff;border:1px solid #dcdcdc;border-radius:1px;box-shadow:0 1px 1px rgba(0,0,0,.15)"></div>
<div class="a" style="left:1120px;top:817px;width:2px;height:2px;background:#e8a0a0"></div>
<div class="t" style="left:1130.0px;top:815.7px;line-height:15px;height:15px;letter-spacing:-0.30px;">Workspace 0</div>
<svg class="a" style="left:1199px;top:820px" width="7" height="9" viewBox="0 0 7 9"><path d="M6.500 .5v8L.5 4.500z" fill="#9a9a9a"/></svg>
<svg class="a" style="left:1216px;top:820px" width="7" height="9" viewBox="0 0 7 9"><path d="M.5 .5v8l6-4z" fill="#9a9a9a"/></svg>
<svg class="a" style="left:1243px;top:815px" width="16" height="17" viewBox="0 0 16 17"><defs><radialGradient id="g2" cx=".4" cy=".35" r=".8"><stop offset="0" stop-color="#a9dcf8"/><stop offset=".55" stop-color="#4a9fe0"/><stop offset="1" stop-color="#2a6fb8"/></radialGradient></defs><circle cx="8.500" cy="7.500" r="6.800" fill="url(#g2)" stroke="#7a8aa0" stroke-width=".7"/><path d="M6.500 2c2-.6 4 .2 5 1.500-.3 1.500-1.800 1.800-2.200 3.200-.3 1.300.8 2 .3 3.200-1.500.3-2.500-.8-3-2-.5-1.400-.9-2.600-.5-3.700z" fill="#62b94d"/><path d="M12.500 7c.9.700 1.200 2 .7 3.200-.8.200-1.300-.6-1.300-1.500 0-.7.300-1.200.6-1.700z" fill="#62b94d"/><path d="M1 9.500h4.500V7.500L9.500 11l-4 3.500v-2H3c0 1.500 1 2.700 2.500 3.200C2.800 15.500 1 13 1 9.500z" fill="#f4c531" stroke="#b8860b" stroke-width=".7" stroke-linejoin="round"/></svg>

<div class="a" style="left:-20px;top:221px;width:524px;height:600px;border-radius:0 7px 7px 0;background:#3b6cb7;box-shadow:0 2px 6px 1px rgba(0,0,0,.4),5px 7px 10px 2px rgba(0,0,0,.48),0 0 2px 1px rgba(0,0,0,.4);border:1px solid #1c2c48"></div>
<div class="a" style="left:-19px;top:222px;width:522px;height:28px;border-radius:0 6px 0 0;background:linear-gradient(90deg,#4d7ec4 3.500%,#3b6fba 10%,#3567b4 28%,#3b6eb9 42%,#3061ae 55%,#3f70ba 66%,#6a93ce 82%,#7da2d5 92%,#7fa4d6 100%);box-shadow:inset 0 1px 0 rgba(255,255,255,.55)"></div>
<div class="a" style="left:496px;top:242px;width:7px;height:148px;background:linear-gradient(#7ca1d6 0,#82a8dc 55%,#a0c0e8 85%,#cfe0f5 100%)"></div>
<div class="a" style="left:496px;top:390px;width:7px;height:424px;background:linear-gradient(90deg,#4f7fc6,#3564b0)"></div>
<div class="a" style="left:-19px;top:813px;width:522px;height:7px;border-radius:0 0 6px 0;background:linear-gradient(#3b6cb7,#3362ad)"></div>
<div class="a" style="left:-19px;top:249px;width:516px;height:1px;background:#8fb0de"></div>
<div class="a" style="left:-19px;top:250px;width:516px;height:1px;background:#1f3a66"></div>
<div class="a" style="left:495px;top:250px;width:1px;height:564px;background:#2c4f8c"></div>
<div class="a" style="left:496px;top:250px;width:1px;height:565px;background:rgba(190,215,245,.55)"></div>
<div class="a" style="left:-19px;top:813px;width:515px;height:1px;background:#2c4f8c"></div>
<div class="a" style="left:-19px;top:814px;width:516px;height:1px;background:#8fb4e4"></div>
<div class="a" style="left:450px;top:222px;width:47px;height:20px;border:1px solid #4a1a12;border-top:none;border-radius:0 0 5px 5px;background:linear-gradient(#e9b0a4 0,#d98676 45%,#c4402a 50%,#c9523a 80%,#dc8468 100%);box-shadow:inset 0 0 0 1px rgba(255,255,255,.45)"></div>
<svg class="a" style="left:467px;top:226px" width="14" height="11" viewBox="0 0 14 11"><path d="M.8 .8h4.200l2 2.300 2-2.300h4.200L9.300 5.500l3.900 4.700H9L7 7.900 5 10.200H.8l3.900-4.700z" fill="#fff" stroke="#4a2a26" stroke-width="1" stroke-linejoin="round"/></svg>
<div class="a" style="left:-19px;top:251px;width:514px;height:520px;background:#fff"></div>
<div class="t b" style="left:-1.0px;top:266.7px;line-height:28px;height:28px;font-size:24px;letter-spacing:0.34px;-webkit-text-stroke:.7px #000;">ort</div>
<div class="a" style="left:-19px;top:307px;width:494px;height:1px;background:#3a3a3a"></div>
<div class="a" style="left:-19px;top:308px;width:494px;height:1px;background:rgba(0,0,0,.22)"></div>
<div class="t b" style="left:32.3px;top:509.2px;line-height:25px;height:25px;font-size:21px;letter-spacing:0.02px;-webkit-text-stroke:.7px #000;">Size Distribution</div>
<div class="a" style="left:-19px;top:542px;width:424px;height:229px;border:1px solid #8a8a8a;border-bottom:none;background:#fff"></div>
<svg class="a" style="left:0;top:0" width="405" height="771" viewBox="0 0 405 771"><g stroke="#adadad" stroke-width="1" stroke-dasharray="2 2" fill="none"><path d="M20.5 543V771"/><path d="M61.5 543V771"/><path d="M101.5 543V771"/><path d="M142.5 543V771"/><path d="M183.5 543V771"/><path d="M223.5 543V771"/><path d="M264.5 543V771"/><path d="M304.5 543V771"/><path d="M345.5 543V771"/><path d="M386.5 543V771"/><path d="M0 552.5H404"/><path d="M0 586.5H404"/><path d="M0 620.5H404"/><path d="M0 654.5H404"/><path d="M0 688.5H404"/><path d="M0 722.5H404"/><path d="M0 756.5H404"/></g><g fill="#d9465a"><rect x="68" y="542.500" width="3" height="2.300"/><rect x="116" y="646" width="3" height="3"/><rect x="126" y="749" width="3" height="3"/></g></svg>
<div class="a" style="left:479px;top:251px;width:16px;height:519px;background:linear-gradient(90deg,#f2f2f2,#ececec)"></div>
<svg class="a" style="left:484px;top:259px" width="7" height="4" viewBox="0 0 7 4"><path d="M0 4h7L3.500 0z" fill="#505050"/></svg>
<svg class="a" style="left:484px;top:760px" width="7" height="4" viewBox="0 0 7 4"><path d="M0 0h7L3.500 4z" fill="#505050"/></svg>
<div class="a" style="left:480px;top:270px;width:14px;height:299px;border:1px solid #979797;border-radius:2px;background:linear-gradient(90deg,#f6f6f6 0,#e8e8e8 45%,#d4d4d4 55%,#cbcbcb 100%)"></div>
<div class="a" style="left:483px;top:415px;width:7px;height:1px;background:#555;box-shadow:0 2px 0 #555,0 4px 0 #555,0 6px 0 #555"></div>
<div class="a" style="left:-19px;top:770px;width:515px;height:43px;background:#f0f0f0;border-top:1px solid #9a9a9a"></div>
<div class="t" style="left:-3.0px;top:781.2px;line-height:15px;height:15px;letter-spacing:-0.18px;">Сохранить</div>
<div class="a" style="left:410px;top:778px;width:75px;height:21px;border:1px solid #707070;border-radius:3px;background:linear-gradient(#f3f3f3 0,#ebebeb 48%,#dddddd 52%,#d0d0d0 100%);box-shadow:inset 0 0 0 1px rgba(255,255,255,.7)"></div>
<div class="t" style="left:424.0px;top:781.2px;line-height:15px;height:15px;letter-spacing:0.16px;">Закрыть</div>

</body></html>
